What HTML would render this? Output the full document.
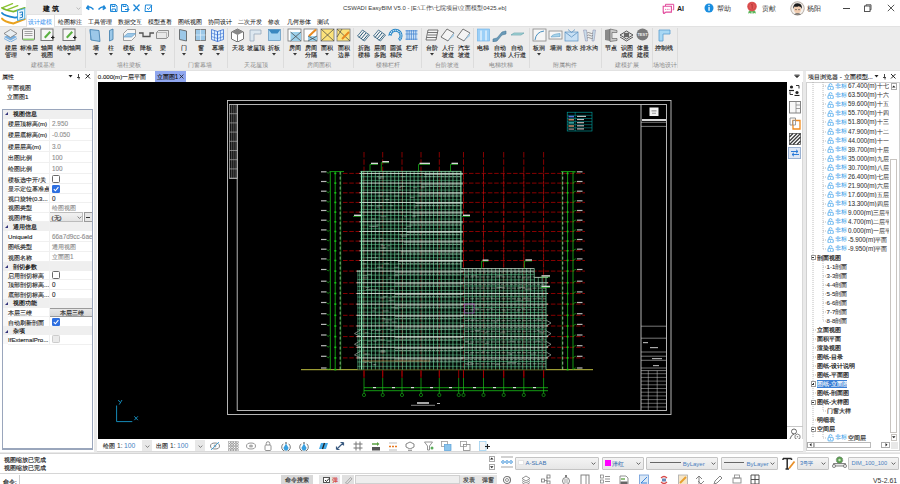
<!DOCTYPE html>
<html><head><meta charset="utf-8">
<style>
*{box-sizing:border-box;margin:0;padding:0}
html,body{width:900px;height:484px;overflow:hidden;background:#fff;font-family:"Liberation Sans",sans-serif;color:#222}
.a{position:absolute}
.t{position:absolute;white-space:nowrap;line-height:1}
#title{left:0;top:0;width:900px;height:15px;background:#fff}
#tabs{left:0;top:15px;width:900px;height:11px;background:#fff}
#ribbon{left:0;top:26px;width:900px;height:45px;background:#ececec;border-top:1px solid #e2e2e2;border-bottom:1px solid #e2e2e2}
#mid{left:0;top:71px;width:900px;height:382px;background:#e9e9e9}
#lp{left:0;top:71px;width:94px;height:381px;background:#fff}
#doc{left:97px;top:71px;width:706px;height:381px;background:#fff}
#cad{left:98px;top:82px;width:689px;height:357px;background:#000}
#rp{left:806px;top:71px;width:94px;height:381px;background:#fff}
#out{left:0;top:453px;width:497px;height:20px;background:#fff;border-top:1px solid #d4d4d4;border-bottom:1px solid #d4d4d4}
#cmd{left:0;top:473px;width:900px;height:11px;background:#fff}
</style></head><body>
<div id="title" class="a"></div>
<div id="tabs" class="a"></div>
<div id="ribbon" class="a"></div>
<div id="mid" class="a"></div>
<div id="lp" class="a"></div>
<div id="doc" class="a"></div>
<svg class="a" style="left:98px;top:82px" width="689" height="357" viewBox="98 82 689 357" shape-rendering="geometricPrecision">
<rect x="98" y="82" width="689" height="357" fill="#000"/>
<rect x="227.5" y="100.5" width="443.5" height="314" fill="none" stroke="#c8c8c8" stroke-width="0.9"/>
<rect x="237.2" y="104.5" width="429.3" height="306" fill="none" stroke="#c8c8c8" stroke-width="0.9"/>
<rect x="229.5" y="104.5" width="7.7" height="74" fill="none" stroke="#c8c8c8" stroke-width="0.7"/>
<line x1="229.5" y1="104.5" x2="237.2" y2="104.5" stroke="#c8c8c8" stroke-width="0.6"/>
<line x1="229.5" y1="113.7" x2="237.2" y2="113.7" stroke="#c8c8c8" stroke-width="0.6"/>
<line x1="229.5" y1="122.9" x2="237.2" y2="122.9" stroke="#c8c8c8" stroke-width="0.6"/>
<line x1="229.5" y1="132.1" x2="237.2" y2="132.1" stroke="#c8c8c8" stroke-width="0.6"/>
<line x1="229.5" y1="141.3" x2="237.2" y2="141.3" stroke="#c8c8c8" stroke-width="0.6"/>
<line x1="229.5" y1="150.5" x2="237.2" y2="150.5" stroke="#c8c8c8" stroke-width="0.6"/>
<line x1="229.5" y1="159.7" x2="237.2" y2="159.7" stroke="#c8c8c8" stroke-width="0.6"/>
<line x1="229.5" y1="168.9" x2="237.2" y2="168.9" stroke="#c8c8c8" stroke-width="0.6"/>
<line x1="229.5" y1="178.1" x2="237.2" y2="178.1" stroke="#c8c8c8" stroke-width="0.6"/>
<line x1="231.3" y1="104.5" x2="231.3" y2="178.5" stroke="#a8a8a8" stroke-width="0.55"/>
<line x1="233.2" y1="104.5" x2="233.2" y2="178.5" stroke="#a8a8a8" stroke-width="0.55"/>
<line x1="235.1" y1="104.5" x2="235.1" y2="178.5" stroke="#a8a8a8" stroke-width="0.55"/>
<line x1="641" y1="104.5" x2="641" y2="410.5" stroke="#c8c8c8" stroke-width="0.9"/>
<line x1="641" y1="126.4" x2="666.5" y2="126.4" stroke="#c8c8c8" stroke-width="0.6"/>
<line x1="641" y1="326.2" x2="666.5" y2="326.2" stroke="#c8c8c8" stroke-width="0.6"/>
<line x1="641" y1="338.2" x2="666.5" y2="338.2" stroke="#c8c8c8" stroke-width="0.6"/>
<line x1="641" y1="352" x2="666.5" y2="352" stroke="#c8c8c8" stroke-width="0.6"/>
<line x1="641" y1="356.2" x2="666.5" y2="356.2" stroke="#c8c8c8" stroke-width="0.6"/>
<line x1="641" y1="360.3" x2="666.5" y2="360.3" stroke="#c8c8c8" stroke-width="0.6"/>
<line x1="641" y1="368" x2="666.5" y2="368" stroke="#c8c8c8" stroke-width="0.6"/>
<line x1="641" y1="370.6" x2="666.5" y2="370.6" stroke="#c8c8c8" stroke-width="0.6"/>
<rect x="649.5" y="107.5" width="9" height="8.5" fill="#f0f0f0"/>
<rect x="651.5" y="110.5" width="5" height="0.8" fill="#666"/><rect x="652" y="112.8" width="4" height="0.8" fill="#888"/>
<rect x="642" y="119" width="24" height="2" fill="#d8d8d8"/>
<line x1="641" y1="122.3" x2="666.5" y2="122.3" stroke="#c8c8c8" stroke-width="0.6"/>
<line x1="641" y1="373.7" x2="666.5" y2="373.7" stroke="#c8c8c8" stroke-width="0.5"/>
<line x1="641" y1="377.4" x2="666.5" y2="377.4" stroke="#c8c8c8" stroke-width="0.5"/>
<line x1="641" y1="381.1" x2="666.5" y2="381.1" stroke="#c8c8c8" stroke-width="0.5"/>
<line x1="641" y1="384.8" x2="666.5" y2="384.8" stroke="#c8c8c8" stroke-width="0.5"/>
<line x1="641" y1="388.5" x2="666.5" y2="388.5" stroke="#c8c8c8" stroke-width="0.5"/>
<line x1="641" y1="392.2" x2="666.5" y2="392.2" stroke="#c8c8c8" stroke-width="0.5"/>
<line x1="641" y1="395.9" x2="666.5" y2="395.9" stroke="#c8c8c8" stroke-width="0.5"/>
<line x1="641" y1="399.6" x2="666.5" y2="399.6" stroke="#c8c8c8" stroke-width="0.5"/>
<line x1="641" y1="403.3" x2="666.5" y2="403.3" stroke="#c8c8c8" stroke-width="0.5"/>
<line x1="641" y1="407.0" x2="666.5" y2="407.0" stroke="#c8c8c8" stroke-width="0.5"/>
<line x1="648.3" y1="370.6" x2="648.3" y2="410.5" stroke="#c8c8c8" stroke-width="0.5"/>
<line x1="657.2" y1="370.6" x2="657.2" y2="410.5" stroke="#c8c8c8" stroke-width="0.5"/>
<rect x="650" y="347" width="8" height="1.2" fill="#aaa"/>
<rect x="652" y="358" width="10" height="1.2" fill="#aaa"/>
<rect x="653" y="365" width="6" height="1.2" fill="#aaa"/>
<rect x="643" y="342" width="5" height="1.2" fill="#aaa"/>
<rect x="567.2" y="112.2" width="24.8" height="18.8" fill="none" stroke="#00a8a8" stroke-width="0.6"/>
<line x1="575.2" y1="112.2" x2="575.2" y2="131" stroke="#00a8a8" stroke-width="0.5"/>
<line x1="567.2" y1="115.3" x2="592" y2="115.3" stroke="#00a8a8" stroke-width="0.5"/>
<line x1="567.2" y1="118.5" x2="592" y2="118.5" stroke="#00a8a8" stroke-width="0.5"/>
<line x1="567.2" y1="121.6" x2="592" y2="121.6" stroke="#00a8a8" stroke-width="0.5"/>
<line x1="567.2" y1="124.7" x2="592" y2="124.7" stroke="#00a8a8" stroke-width="0.5"/>
<line x1="567.2" y1="127.8" x2="592" y2="127.8" stroke="#00a8a8" stroke-width="0.5"/>
<rect x="568.5" y="115.8" width="5.5" height="1.6" fill="#5577dd"/>
<rect x="577" y="115.8" width="9" height="1.2" fill="#bbb"/>
<rect x="568.5" y="118.9" width="5.5" height="1.6" fill="#bb8866"/>
<rect x="577" y="118.9" width="7" height="1.2" fill="#bbb"/>
<rect x="568.5" y="122.1" width="5.5" height="1.6" fill="#33aaaa"/>
<rect x="577" y="122.1" width="7" height="1.2" fill="#bbb"/>
<rect x="568.5" y="125.2" width="5.5" height="1.6" fill="#bb8866"/>
<rect x="577" y="125.2" width="7" height="1.2" fill="#bbb"/>
<rect x="568.5" y="128.3" width="5.5" height="1.6" fill="#777"/>
<rect x="577" y="128.3" width="7" height="1.2" fill="#bbb"/>
<line x1="343" y1="357.9" x2="585" y2="357.9" stroke="#a80000" stroke-width="0.8" stroke-dasharray="4.5 1.8"/>
<line x1="343" y1="347.3" x2="585" y2="347.3" stroke="#a80000" stroke-width="0.8" stroke-dasharray="4.5 1.8"/>
<line x1="343" y1="336.6" x2="585" y2="336.6" stroke="#a80000" stroke-width="0.8" stroke-dasharray="4.5 1.8"/>
<line x1="343" y1="326.0" x2="585" y2="326.0" stroke="#a80000" stroke-width="0.8" stroke-dasharray="4.5 1.8"/>
<line x1="343" y1="315.3" x2="585" y2="315.3" stroke="#a80000" stroke-width="0.8" stroke-dasharray="4.5 1.8"/>
<line x1="343" y1="304.1" x2="585" y2="304.1" stroke="#a80000" stroke-width="0.8" stroke-dasharray="4.5 1.8"/>
<line x1="343" y1="293.5" x2="585" y2="293.5" stroke="#a80000" stroke-width="0.8" stroke-dasharray="4.5 1.8"/>
<line x1="343" y1="282.8" x2="585" y2="282.8" stroke="#a80000" stroke-width="0.8" stroke-dasharray="4.5 1.8"/>
<line x1="343" y1="271.1" x2="585" y2="271.1" stroke="#a80000" stroke-width="0.8" stroke-dasharray="4.5 1.8"/>
<line x1="343" y1="260.5" x2="585" y2="260.5" stroke="#a80000" stroke-width="0.8" stroke-dasharray="4.5 1.8"/>
<line x1="343" y1="250.8" x2="585" y2="250.8" stroke="#a80000" stroke-width="0.8" stroke-dasharray="4.5 1.8"/>
<line x1="343" y1="241.1" x2="585" y2="241.1" stroke="#a80000" stroke-width="0.8" stroke-dasharray="4.5 1.8"/>
<line x1="343" y1="231.5" x2="585" y2="231.5" stroke="#a80000" stroke-width="0.8" stroke-dasharray="4.5 1.8"/>
<line x1="343" y1="221.8" x2="585" y2="221.8" stroke="#a80000" stroke-width="0.8" stroke-dasharray="4.5 1.8"/>
<line x1="343" y1="212.1" x2="585" y2="212.1" stroke="#a80000" stroke-width="0.8" stroke-dasharray="4.5 1.8"/>
<line x1="343" y1="202.4" x2="585" y2="202.4" stroke="#a80000" stroke-width="0.8" stroke-dasharray="4.5 1.8"/>
<line x1="343" y1="192.8" x2="585" y2="192.8" stroke="#a80000" stroke-width="0.8" stroke-dasharray="4.5 1.8"/>
<line x1="343" y1="183.1" x2="585" y2="183.1" stroke="#a80000" stroke-width="0.8" stroke-dasharray="4.5 1.8"/>
<line x1="343" y1="173.4" x2="585" y2="173.4" stroke="#a80000" stroke-width="0.8" stroke-dasharray="4.5 1.8"/>
<line x1="364" y1="152" x2="364" y2="378" stroke="#a80000" stroke-width="0.8" stroke-dasharray="5.5 1.8"/>
<line x1="382.7" y1="152" x2="382.7" y2="378" stroke="#a80000" stroke-width="0.8" stroke-dasharray="5.5 1.8"/>
<line x1="402" y1="152" x2="402" y2="378" stroke="#a80000" stroke-width="0.8" stroke-dasharray="5.5 1.8"/>
<line x1="421" y1="152" x2="421" y2="378" stroke="#a80000" stroke-width="0.8" stroke-dasharray="5.5 1.8"/>
<line x1="439.3" y1="152" x2="439.3" y2="378" stroke="#a80000" stroke-width="0.8" stroke-dasharray="5.5 1.8"/>
<line x1="463.5" y1="152" x2="463.5" y2="378" stroke="#a80000" stroke-width="0.8" stroke-dasharray="5.5 1.8"/>
<line x1="483.5" y1="152" x2="483.5" y2="378" stroke="#a80000" stroke-width="0.8" stroke-dasharray="5.5 1.8"/>
<line x1="503.7" y1="152" x2="503.7" y2="378" stroke="#a80000" stroke-width="0.8" stroke-dasharray="5.5 1.8"/>
<line x1="523.8" y1="152" x2="523.8" y2="378" stroke="#a80000" stroke-width="0.8" stroke-dasharray="5.5 1.8"/>
<line x1="543.6" y1="152" x2="543.6" y2="378" stroke="#a80000" stroke-width="0.8" stroke-dasharray="5.5 1.8"/>
<line x1="301" y1="369.7" x2="593" y2="369.7" stroke="#c0c040" stroke-width="1"/>
<line x1="330.3" y1="171.6" x2="330.3" y2="369.7" stroke="#18c018" stroke-width="0.8"/>
<line x1="335.2" y1="171.6" x2="335.2" y2="369.7" stroke="#18c018" stroke-width="0.8"/>
<line x1="340.2" y1="171.6" x2="340.2" y2="369.7" stroke="#e8e8e8" stroke-width="0.8" stroke-dasharray="3 2"/>
<line x1="340.8" y1="171.6" x2="340.8" y2="369.7" stroke="#18c018" stroke-width="0.5"/>
<line x1="329.5" y1="171.6" x2="344" y2="171.6" stroke="#18c018" stroke-width="0.8"/>
<rect x="321" y="367.4" width="5.5" height="1.2" fill="#b8b8b8"/>
<path d="M326.5 368.1 l1.8 1.5 l1.2 -1.5" stroke="#18c018" stroke-width="0.6" fill="none"/>
<rect x="334.3" y="368.8" width="2" height="1.6" fill="#18c018"/>
<rect x="321" y="355.7" width="5.5" height="1.2" fill="#b8b8b8"/>
<path d="M326.5 356.4 l1.8 1.5 l1.2 -1.5" stroke="#18c018" stroke-width="0.6" fill="none"/>
<rect x="334.3" y="357.1" width="2" height="1.6" fill="#18c018"/>
<rect x="321" y="345.1" width="5.5" height="1.2" fill="#b8b8b8"/>
<path d="M326.5 345.8 l1.8 1.5 l1.2 -1.5" stroke="#18c018" stroke-width="0.6" fill="none"/>
<rect x="334.3" y="346.5" width="2" height="1.6" fill="#18c018"/>
<rect x="321" y="334.4" width="5.5" height="1.2" fill="#b8b8b8"/>
<path d="M326.5 335.1 l1.8 1.5 l1.2 -1.5" stroke="#18c018" stroke-width="0.6" fill="none"/>
<rect x="334.3" y="335.8" width="2" height="1.6" fill="#18c018"/>
<rect x="321" y="323.8" width="5.5" height="1.2" fill="#b8b8b8"/>
<path d="M326.5 324.5 l1.8 1.5 l1.2 -1.5" stroke="#18c018" stroke-width="0.6" fill="none"/>
<rect x="334.3" y="325.2" width="2" height="1.6" fill="#18c018"/>
<rect x="321" y="313.1" width="5.5" height="1.2" fill="#b8b8b8"/>
<path d="M326.5 313.8 l1.8 1.5 l1.2 -1.5" stroke="#18c018" stroke-width="0.6" fill="none"/>
<rect x="334.3" y="314.5" width="2" height="1.6" fill="#18c018"/>
<rect x="321" y="301.9" width="5.5" height="1.2" fill="#b8b8b8"/>
<path d="M326.5 302.6 l1.8 1.5 l1.2 -1.5" stroke="#18c018" stroke-width="0.6" fill="none"/>
<rect x="334.3" y="303.3" width="2" height="1.6" fill="#18c018"/>
<rect x="321" y="291.3" width="5.5" height="1.2" fill="#b8b8b8"/>
<path d="M326.5 292.0 l1.8 1.5 l1.2 -1.5" stroke="#18c018" stroke-width="0.6" fill="none"/>
<rect x="334.3" y="292.7" width="2" height="1.6" fill="#18c018"/>
<rect x="321" y="280.6" width="5.5" height="1.2" fill="#b8b8b8"/>
<path d="M326.5 281.3 l1.8 1.5 l1.2 -1.5" stroke="#18c018" stroke-width="0.6" fill="none"/>
<rect x="334.3" y="282.0" width="2" height="1.6" fill="#18c018"/>
<rect x="321" y="268.9" width="5.5" height="1.2" fill="#b8b8b8"/>
<path d="M326.5 269.6 l1.8 1.5 l1.2 -1.5" stroke="#18c018" stroke-width="0.6" fill="none"/>
<rect x="334.3" y="270.3" width="2" height="1.6" fill="#18c018"/>
<rect x="321" y="258.3" width="5.5" height="1.2" fill="#b8b8b8"/>
<path d="M326.5 259.0 l1.8 1.5 l1.2 -1.5" stroke="#18c018" stroke-width="0.6" fill="none"/>
<rect x="334.3" y="259.7" width="2" height="1.6" fill="#18c018"/>
<rect x="321" y="248.6" width="5.5" height="1.2" fill="#b8b8b8"/>
<path d="M326.5 249.3 l1.8 1.5 l1.2 -1.5" stroke="#18c018" stroke-width="0.6" fill="none"/>
<rect x="334.3" y="250.0" width="2" height="1.6" fill="#18c018"/>
<rect x="321" y="238.9" width="5.5" height="1.2" fill="#b8b8b8"/>
<path d="M326.5 239.6 l1.8 1.5 l1.2 -1.5" stroke="#18c018" stroke-width="0.6" fill="none"/>
<rect x="334.3" y="240.3" width="2" height="1.6" fill="#18c018"/>
<rect x="321" y="229.3" width="5.5" height="1.2" fill="#b8b8b8"/>
<path d="M326.5 230.0 l1.8 1.5 l1.2 -1.5" stroke="#18c018" stroke-width="0.6" fill="none"/>
<rect x="334.3" y="230.7" width="2" height="1.6" fill="#18c018"/>
<rect x="321" y="219.6" width="5.5" height="1.2" fill="#b8b8b8"/>
<path d="M326.5 220.3 l1.8 1.5 l1.2 -1.5" stroke="#18c018" stroke-width="0.6" fill="none"/>
<rect x="334.3" y="221.0" width="2" height="1.6" fill="#18c018"/>
<rect x="321" y="209.9" width="5.5" height="1.2" fill="#b8b8b8"/>
<path d="M326.5 210.6 l1.8 1.5 l1.2 -1.5" stroke="#18c018" stroke-width="0.6" fill="none"/>
<rect x="334.3" y="211.3" width="2" height="1.6" fill="#18c018"/>
<rect x="321" y="200.2" width="5.5" height="1.2" fill="#b8b8b8"/>
<path d="M326.5 200.9 l1.8 1.5 l1.2 -1.5" stroke="#18c018" stroke-width="0.6" fill="none"/>
<rect x="334.3" y="201.6" width="2" height="1.6" fill="#18c018"/>
<rect x="321" y="190.6" width="5.5" height="1.2" fill="#b8b8b8"/>
<path d="M326.5 191.3 l1.8 1.5 l1.2 -1.5" stroke="#18c018" stroke-width="0.6" fill="none"/>
<rect x="334.3" y="192.0" width="2" height="1.6" fill="#18c018"/>
<rect x="321" y="180.9" width="5.5" height="1.2" fill="#b8b8b8"/>
<path d="M326.5 181.6 l1.8 1.5 l1.2 -1.5" stroke="#18c018" stroke-width="0.6" fill="none"/>
<rect x="334.3" y="182.3" width="2" height="1.6" fill="#18c018"/>
<rect x="321" y="171.2" width="5.5" height="1.2" fill="#b8b8b8"/>
<path d="M326.5 171.9 l1.8 1.5 l1.2 -1.5" stroke="#18c018" stroke-width="0.6" fill="none"/>
<rect x="334.3" y="172.6" width="2" height="1.6" fill="#18c018"/>
<line x1="567.6" y1="171.6" x2="567.6" y2="369.7" stroke="#18c018" stroke-width="0.8"/>
<line x1="573" y1="171.6" x2="573" y2="369.7" stroke="#18c018" stroke-width="0.8"/>
<line x1="562.7" y1="171.6" x2="562.7" y2="369.7" stroke="#e8e8e8" stroke-width="0.8" stroke-dasharray="3 2"/>
<line x1="562.1" y1="171.6" x2="562.1" y2="369.7" stroke="#18c018" stroke-width="0.5"/>
<line x1="561" y1="171.6" x2="575" y2="171.6" stroke="#18c018" stroke-width="0.8"/>
<rect x="577" y="367.4" width="5.5" height="1.2" fill="#b8b8b8"/>
<path d="M573 369.6 l2 -1.6 l1.5 0" stroke="#18c018" stroke-width="0.6" fill="none"/>
<rect x="566.6" y="368.8" width="2" height="1.6" fill="#18c018"/>
<rect x="577" y="355.7" width="5.5" height="1.2" fill="#b8b8b8"/>
<path d="M573 357.9 l2 -1.6 l1.5 0" stroke="#18c018" stroke-width="0.6" fill="none"/>
<rect x="566.6" y="357.1" width="2" height="1.6" fill="#18c018"/>
<rect x="577" y="345.1" width="5.5" height="1.2" fill="#b8b8b8"/>
<path d="M573 347.3 l2 -1.6 l1.5 0" stroke="#18c018" stroke-width="0.6" fill="none"/>
<rect x="566.6" y="346.5" width="2" height="1.6" fill="#18c018"/>
<rect x="577" y="334.4" width="5.5" height="1.2" fill="#b8b8b8"/>
<path d="M573 336.6 l2 -1.6 l1.5 0" stroke="#18c018" stroke-width="0.6" fill="none"/>
<rect x="566.6" y="335.8" width="2" height="1.6" fill="#18c018"/>
<rect x="577" y="323.8" width="5.5" height="1.2" fill="#b8b8b8"/>
<path d="M573 326.0 l2 -1.6 l1.5 0" stroke="#18c018" stroke-width="0.6" fill="none"/>
<rect x="566.6" y="325.2" width="2" height="1.6" fill="#18c018"/>
<rect x="577" y="313.1" width="5.5" height="1.2" fill="#b8b8b8"/>
<path d="M573 315.3 l2 -1.6 l1.5 0" stroke="#18c018" stroke-width="0.6" fill="none"/>
<rect x="566.6" y="314.5" width="2" height="1.6" fill="#18c018"/>
<rect x="577" y="301.9" width="5.5" height="1.2" fill="#b8b8b8"/>
<path d="M573 304.1 l2 -1.6 l1.5 0" stroke="#18c018" stroke-width="0.6" fill="none"/>
<rect x="566.6" y="303.3" width="2" height="1.6" fill="#18c018"/>
<rect x="577" y="291.3" width="5.5" height="1.2" fill="#b8b8b8"/>
<path d="M573 293.5 l2 -1.6 l1.5 0" stroke="#18c018" stroke-width="0.6" fill="none"/>
<rect x="566.6" y="292.7" width="2" height="1.6" fill="#18c018"/>
<rect x="577" y="280.6" width="5.5" height="1.2" fill="#b8b8b8"/>
<path d="M573 282.8 l2 -1.6 l1.5 0" stroke="#18c018" stroke-width="0.6" fill="none"/>
<rect x="566.6" y="282.0" width="2" height="1.6" fill="#18c018"/>
<rect x="577" y="268.9" width="5.5" height="1.2" fill="#b8b8b8"/>
<path d="M573 271.1 l2 -1.6 l1.5 0" stroke="#18c018" stroke-width="0.6" fill="none"/>
<rect x="566.6" y="270.3" width="2" height="1.6" fill="#18c018"/>
<rect x="577" y="258.3" width="5.5" height="1.2" fill="#b8b8b8"/>
<path d="M573 260.5 l2 -1.6 l1.5 0" stroke="#18c018" stroke-width="0.6" fill="none"/>
<rect x="566.6" y="259.7" width="2" height="1.6" fill="#18c018"/>
<rect x="577" y="248.6" width="5.5" height="1.2" fill="#b8b8b8"/>
<path d="M573 250.8 l2 -1.6 l1.5 0" stroke="#18c018" stroke-width="0.6" fill="none"/>
<rect x="566.6" y="250.0" width="2" height="1.6" fill="#18c018"/>
<rect x="577" y="238.9" width="5.5" height="1.2" fill="#b8b8b8"/>
<path d="M573 241.1 l2 -1.6 l1.5 0" stroke="#18c018" stroke-width="0.6" fill="none"/>
<rect x="566.6" y="240.3" width="2" height="1.6" fill="#18c018"/>
<rect x="577" y="229.3" width="5.5" height="1.2" fill="#b8b8b8"/>
<path d="M573 231.5 l2 -1.6 l1.5 0" stroke="#18c018" stroke-width="0.6" fill="none"/>
<rect x="566.6" y="230.7" width="2" height="1.6" fill="#18c018"/>
<rect x="577" y="219.6" width="5.5" height="1.2" fill="#b8b8b8"/>
<path d="M573 221.8 l2 -1.6 l1.5 0" stroke="#18c018" stroke-width="0.6" fill="none"/>
<rect x="566.6" y="221.0" width="2" height="1.6" fill="#18c018"/>
<rect x="577" y="209.9" width="5.5" height="1.2" fill="#b8b8b8"/>
<path d="M573 212.1 l2 -1.6 l1.5 0" stroke="#18c018" stroke-width="0.6" fill="none"/>
<rect x="566.6" y="211.3" width="2" height="1.6" fill="#18c018"/>
<rect x="577" y="200.2" width="5.5" height="1.2" fill="#b8b8b8"/>
<path d="M573 202.4 l2 -1.6 l1.5 0" stroke="#18c018" stroke-width="0.6" fill="none"/>
<rect x="566.6" y="201.6" width="2" height="1.6" fill="#18c018"/>
<rect x="577" y="190.6" width="5.5" height="1.2" fill="#b8b8b8"/>
<path d="M573 192.8 l2 -1.6 l1.5 0" stroke="#18c018" stroke-width="0.6" fill="none"/>
<rect x="566.6" y="192.0" width="2" height="1.6" fill="#18c018"/>
<rect x="577" y="180.9" width="5.5" height="1.2" fill="#b8b8b8"/>
<path d="M573 183.1 l2 -1.6 l1.5 0" stroke="#18c018" stroke-width="0.6" fill="none"/>
<rect x="566.6" y="182.3" width="2" height="1.6" fill="#18c018"/>
<rect x="577" y="171.2" width="5.5" height="1.2" fill="#b8b8b8"/>
<path d="M573 173.4 l2 -1.6 l1.5 0" stroke="#18c018" stroke-width="0.6" fill="none"/>
<rect x="566.6" y="172.6" width="2" height="1.6" fill="#18c018"/>
<rect x="360.5" y="171.2" width="100.7" height="198.4" fill="#050c08"/>
<rect x="461.2" y="277.4" width="84.8" height="92.2" fill="#050c08"/>
<rect x="461.2" y="268.4" width="73" height="9" fill="#050c08"/>
<rect x="357.5" y="270" width="3" height="99.6" fill="#050c08"/>
<path d="M363.70 171.20V369.60M367.58 171.20V369.60M371.46 171.20V369.60M375.34 171.20V369.60M379.22 171.20V369.60M383.10 171.20V369.60M386.98 171.20V369.60M390.86 171.20V369.60M394.74 171.20V369.60M398.62 171.20V369.60M402.50 171.20V369.60M406.38 171.20V369.60M410.26 171.20V369.60M414.14 171.20V369.60M418.02 171.20V369.60M421.90 171.20V369.60M425.78 171.20V369.60M429.66 171.20V369.60M433.54 171.20V369.60M437.42 171.20V369.60M441.30 171.20V369.60M445.18 171.20V369.60M449.06 171.20V369.60M452.94 171.20V369.60M456.82 171.20V369.60M460.70 171.20V369.60" stroke="#6cd69e" stroke-width="0.68" fill="none"/>
<path d="M464.58 268.40V369.60M468.46 268.40V369.60M472.34 268.40V369.60M476.22 268.40V369.60M480.10 268.40V369.60M483.98 268.40V369.60M487.86 268.40V369.60M491.74 268.40V369.60M495.62 268.40V369.60M499.50 268.40V369.60M503.38 268.40V369.60M507.26 268.40V369.60M511.14 268.40V369.60M515.02 268.40V369.60M518.90 268.40V369.60M522.78 268.40V369.60M526.66 268.40V369.60M530.54 268.40V369.60" stroke="#6cd69e" stroke-width="0.68" fill="none"/>
<path d="M534.42 277.40V369.60M538.30 277.40V369.60M542.18 277.40V369.60" stroke="#6cd69e" stroke-width="0.68" fill="none"/>
<path d="M357.80 270.00V369.60M359.60 270.00V369.60" stroke="#6cd69e" stroke-width="0.5" fill="none"/>
<line x1="364" y1="171.5" x2="364" y2="369.5" stroke="#c01818" stroke-width="0.7" stroke-dasharray="5 1.6" opacity="0.55"/>
<line x1="382.7" y1="171.5" x2="382.7" y2="369.5" stroke="#c01818" stroke-width="0.7" stroke-dasharray="5 1.6" opacity="0.55"/>
<line x1="402" y1="171.5" x2="402" y2="369.5" stroke="#c01818" stroke-width="0.7" stroke-dasharray="5 1.6" opacity="0.55"/>
<line x1="421" y1="171.5" x2="421" y2="369.5" stroke="#c01818" stroke-width="0.7" stroke-dasharray="5 1.6" opacity="0.55"/>
<line x1="439.3" y1="171.5" x2="439.3" y2="369.5" stroke="#c01818" stroke-width="0.7" stroke-dasharray="5 1.6" opacity="0.55"/>
<line x1="463.5" y1="171.5" x2="463.5" y2="369.5" stroke="#c01818" stroke-width="0.7" stroke-dasharray="5 1.6" opacity="0.55"/>
<line x1="483.5" y1="171.5" x2="483.5" y2="369.5" stroke="#c01818" stroke-width="0.7" stroke-dasharray="5 1.6" opacity="0.55"/>
<line x1="503.7" y1="171.5" x2="503.7" y2="369.5" stroke="#c01818" stroke-width="0.7" stroke-dasharray="5 1.6" opacity="0.55"/>
<line x1="523.8" y1="171.5" x2="523.8" y2="369.5" stroke="#c01818" stroke-width="0.7" stroke-dasharray="5 1.6" opacity="0.55"/>
<line x1="543.6" y1="171.5" x2="543.6" y2="369.5" stroke="#c01818" stroke-width="0.7" stroke-dasharray="5 1.6" opacity="0.55"/>
<line x1="356.50" y1="357.94" x2="462.80" y2="357.94" stroke="#dcebdf" stroke-width="0.9"/>
<line x1="357.50" y1="361.91" x2="461.20" y2="361.91" stroke="#6cd69e" stroke-width="0.55"/>
<line x1="357.50" y1="366.34" x2="461.20" y2="366.34" stroke="#6cd69e" stroke-width="0.5"/>
<line x1="395.00" y1="358.94" x2="462.80" y2="358.94" stroke="#c4d4c8" stroke-width="0.65"/>
<line x1="395.00" y1="361.14" x2="461.20" y2="361.14" stroke="#b4c2b8" stroke-width="0.55" stroke-dasharray="3.2 0.9"/>
<line x1="372.69" y1="364.74" x2="375.29" y2="364.74" stroke="#b0c0b4" stroke-width="0.5"/>
<line x1="363.59" y1="361.14" x2="368.88" y2="361.14" stroke="#b0c0b4" stroke-width="0.5"/>
<line x1="374.07" y1="364.74" x2="376.30" y2="364.74" stroke="#b0c0b4" stroke-width="0.5"/>
<line x1="369.09" y1="362.54" x2="371.43" y2="362.54" stroke="#b0c0b4" stroke-width="0.5"/>
<line x1="364.31" y1="362.54" x2="366.67" y2="362.54" stroke="#b0c0b4" stroke-width="0.5"/>
<line x1="461.20" y1="357.94" x2="548.00" y2="357.94" stroke="#dcebdf" stroke-width="0.9"/>
<line x1="461.20" y1="361.44" x2="546.00" y2="361.44" stroke="#6cd69e" stroke-width="0.55"/>
<line x1="461.20" y1="366.69" x2="546.00" y2="366.69" stroke="#6cd69e" stroke-width="0.5"/>
<line x1="465.00" y1="363.77" x2="546.00" y2="363.77" stroke="#b8c8bc" stroke-width="0.6" stroke-dasharray="4 1.2"/>
<line x1="465.00" y1="359.54" x2="546.00" y2="359.54" stroke="#a8bcac" stroke-width="0.5" stroke-dasharray="3 1.5"/>
<line x1="467.55" y1="362.54" x2="472.38" y2="362.54" stroke="#a8b8ac" stroke-width="0.5"/>
<line x1="511.56" y1="362.54" x2="516.47" y2="362.54" stroke="#a8b8ac" stroke-width="0.5"/>
<line x1="507.44" y1="362.54" x2="511.42" y2="362.54" stroke="#a8b8ac" stroke-width="0.5"/>
<line x1="466.59" y1="364.74" x2="472.88" y2="364.74" stroke="#a8b8ac" stroke-width="0.5"/>
<line x1="495.27" y1="364.74" x2="499.98" y2="364.74" stroke="#a8b8ac" stroke-width="0.5"/>
<line x1="356.50" y1="347.28" x2="462.80" y2="347.28" stroke="#dcebdf" stroke-width="0.9"/>
<line x1="357.50" y1="350.91" x2="461.20" y2="350.91" stroke="#6cd69e" stroke-width="0.55"/>
<line x1="357.50" y1="354.96" x2="461.20" y2="354.96" stroke="#6cd69e" stroke-width="0.5"/>
<line x1="395.00" y1="348.28" x2="462.80" y2="348.28" stroke="#c4d4c8" stroke-width="0.65"/>
<line x1="395.00" y1="350.48" x2="461.20" y2="350.48" stroke="#b4c2b8" stroke-width="0.55" stroke-dasharray="3.2 0.9"/>
<line x1="380.49" y1="350.48" x2="385.22" y2="350.48" stroke="#b0c0b4" stroke-width="0.5"/>
<line x1="381.19" y1="351.88" x2="385.75" y2="351.88" stroke="#b0c0b4" stroke-width="0.5"/>
<line x1="365.22" y1="354.08" x2="370.06" y2="354.08" stroke="#b0c0b4" stroke-width="0.5"/>
<line x1="363.97" y1="354.08" x2="366.79" y2="354.08" stroke="#b0c0b4" stroke-width="0.5"/>
<line x1="379.55" y1="351.88" x2="384.66" y2="351.88" stroke="#b0c0b4" stroke-width="0.5"/>
<line x1="461.20" y1="347.28" x2="548.00" y2="347.28" stroke="#dcebdf" stroke-width="0.9"/>
<line x1="461.20" y1="350.48" x2="546.00" y2="350.48" stroke="#6cd69e" stroke-width="0.55"/>
<line x1="461.20" y1="355.28" x2="546.00" y2="355.28" stroke="#6cd69e" stroke-width="0.5"/>
<line x1="465.00" y1="352.61" x2="546.00" y2="352.61" stroke="#b8c8bc" stroke-width="0.6" stroke-dasharray="4 1.2"/>
<line x1="465.00" y1="348.88" x2="546.00" y2="348.88" stroke="#a8bcac" stroke-width="0.5" stroke-dasharray="3 1.5"/>
<line x1="508.09" y1="354.08" x2="512.35" y2="354.08" stroke="#a8b8ac" stroke-width="0.5"/>
<line x1="482.13" y1="351.88" x2="485.03" y2="351.88" stroke="#a8b8ac" stroke-width="0.5"/>
<line x1="469.30" y1="354.08" x2="472.80" y2="354.08" stroke="#a8b8ac" stroke-width="0.5"/>
<line x1="530.39" y1="354.08" x2="536.03" y2="354.08" stroke="#a8b8ac" stroke-width="0.5"/>
<line x1="509.89" y1="354.08" x2="512.26" y2="354.08" stroke="#a8b8ac" stroke-width="0.5"/>
<line x1="356.50" y1="336.62" x2="462.80" y2="336.62" stroke="#dcebdf" stroke-width="0.9"/>
<line x1="357.50" y1="340.24" x2="461.20" y2="340.24" stroke="#6cd69e" stroke-width="0.55"/>
<line x1="357.50" y1="344.29" x2="461.20" y2="344.29" stroke="#6cd69e" stroke-width="0.5"/>
<line x1="395.00" y1="337.62" x2="462.80" y2="337.62" stroke="#c4d4c8" stroke-width="0.65"/>
<line x1="395.00" y1="339.82" x2="461.20" y2="339.82" stroke="#b4c2b8" stroke-width="0.55" stroke-dasharray="3.2 0.9"/>
<line x1="367.44" y1="341.22" x2="370.81" y2="341.22" stroke="#b0c0b4" stroke-width="0.5"/>
<line x1="375.92" y1="339.82" x2="381.76" y2="339.82" stroke="#b0c0b4" stroke-width="0.5"/>
<line x1="387.23" y1="341.22" x2="391.52" y2="341.22" stroke="#b0c0b4" stroke-width="0.5"/>
<line x1="373.22" y1="341.22" x2="376.62" y2="341.22" stroke="#b0c0b4" stroke-width="0.5"/>
<line x1="381.14" y1="339.82" x2="384.96" y2="339.82" stroke="#b0c0b4" stroke-width="0.5"/>
<line x1="461.20" y1="336.62" x2="548.00" y2="336.62" stroke="#dcebdf" stroke-width="0.9"/>
<line x1="461.20" y1="339.82" x2="546.00" y2="339.82" stroke="#6cd69e" stroke-width="0.55"/>
<line x1="461.20" y1="344.61" x2="546.00" y2="344.61" stroke="#6cd69e" stroke-width="0.5"/>
<line x1="465.00" y1="341.95" x2="546.00" y2="341.95" stroke="#b8c8bc" stroke-width="0.6" stroke-dasharray="4 1.2"/>
<line x1="465.00" y1="338.22" x2="546.00" y2="338.22" stroke="#a8bcac" stroke-width="0.5" stroke-dasharray="3 1.5"/>
<line x1="535.74" y1="341.22" x2="540.11" y2="341.22" stroke="#a8b8ac" stroke-width="0.5"/>
<line x1="467.67" y1="343.42" x2="473.18" y2="343.42" stroke="#a8b8ac" stroke-width="0.5"/>
<line x1="484.91" y1="343.42" x2="488.84" y2="343.42" stroke="#a8b8ac" stroke-width="0.5"/>
<line x1="464.74" y1="341.22" x2="469.05" y2="341.22" stroke="#a8b8ac" stroke-width="0.5"/>
<line x1="510.04" y1="341.22" x2="514.51" y2="341.22" stroke="#a8b8ac" stroke-width="0.5"/>
<line x1="356.50" y1="325.95" x2="462.80" y2="325.95" stroke="#dcebdf" stroke-width="0.9"/>
<line x1="357.50" y1="329.58" x2="461.20" y2="329.58" stroke="#6cd69e" stroke-width="0.55"/>
<line x1="357.50" y1="333.63" x2="461.20" y2="333.63" stroke="#6cd69e" stroke-width="0.5"/>
<line x1="395.00" y1="326.95" x2="462.80" y2="326.95" stroke="#c4d4c8" stroke-width="0.65"/>
<line x1="395.00" y1="329.15" x2="461.20" y2="329.15" stroke="#b4c2b8" stroke-width="0.55" stroke-dasharray="3.2 0.9"/>
<line x1="387.35" y1="329.15" x2="389.87" y2="329.15" stroke="#b0c0b4" stroke-width="0.5"/>
<line x1="375.13" y1="330.55" x2="380.80" y2="330.55" stroke="#b0c0b4" stroke-width="0.5"/>
<line x1="364.66" y1="332.75" x2="368.46" y2="332.75" stroke="#b0c0b4" stroke-width="0.5"/>
<line x1="371.17" y1="330.55" x2="373.72" y2="330.55" stroke="#b0c0b4" stroke-width="0.5"/>
<line x1="390.51" y1="330.55" x2="393.63" y2="330.55" stroke="#b0c0b4" stroke-width="0.5"/>
<line x1="461.20" y1="325.95" x2="548.00" y2="325.95" stroke="#dcebdf" stroke-width="0.9"/>
<line x1="461.20" y1="329.15" x2="546.00" y2="329.15" stroke="#6cd69e" stroke-width="0.55"/>
<line x1="461.20" y1="333.95" x2="546.00" y2="333.95" stroke="#6cd69e" stroke-width="0.5"/>
<line x1="465.00" y1="331.28" x2="546.00" y2="331.28" stroke="#b8c8bc" stroke-width="0.6" stroke-dasharray="4 1.2"/>
<line x1="465.00" y1="327.55" x2="546.00" y2="327.55" stroke="#a8bcac" stroke-width="0.5" stroke-dasharray="3 1.5"/>
<line x1="538.96" y1="332.75" x2="544.37" y2="332.75" stroke="#a8b8ac" stroke-width="0.5"/>
<line x1="536.75" y1="330.55" x2="539.50" y2="330.55" stroke="#a8b8ac" stroke-width="0.5"/>
<line x1="474.65" y1="330.55" x2="479.94" y2="330.55" stroke="#a8b8ac" stroke-width="0.5"/>
<line x1="500.34" y1="332.75" x2="505.29" y2="332.75" stroke="#a8b8ac" stroke-width="0.5"/>
<line x1="484.71" y1="332.75" x2="487.44" y2="332.75" stroke="#a8b8ac" stroke-width="0.5"/>
<line x1="356.50" y1="315.29" x2="462.80" y2="315.29" stroke="#dcebdf" stroke-width="0.9"/>
<line x1="357.50" y1="318.91" x2="461.20" y2="318.91" stroke="#6cd69e" stroke-width="0.55"/>
<line x1="357.50" y1="322.97" x2="461.20" y2="322.97" stroke="#6cd69e" stroke-width="0.5"/>
<line x1="395.00" y1="316.29" x2="462.80" y2="316.29" stroke="#c4d4c8" stroke-width="0.65"/>
<line x1="395.00" y1="318.49" x2="461.20" y2="318.49" stroke="#b4c2b8" stroke-width="0.55" stroke-dasharray="3.2 0.9"/>
<line x1="382.12" y1="318.49" x2="385.40" y2="318.49" stroke="#b0c0b4" stroke-width="0.5"/>
<line x1="384.79" y1="322.09" x2="388.85" y2="322.09" stroke="#b0c0b4" stroke-width="0.5"/>
<line x1="383.61" y1="319.89" x2="388.57" y2="319.89" stroke="#b0c0b4" stroke-width="0.5"/>
<line x1="391.68" y1="322.09" x2="396.80" y2="322.09" stroke="#b0c0b4" stroke-width="0.5"/>
<line x1="388.33" y1="319.89" x2="391.90" y2="319.89" stroke="#b0c0b4" stroke-width="0.5"/>
<line x1="461.20" y1="315.29" x2="548.00" y2="315.29" stroke="#dcebdf" stroke-width="0.9"/>
<line x1="461.20" y1="318.49" x2="546.00" y2="318.49" stroke="#6cd69e" stroke-width="0.55"/>
<line x1="461.20" y1="323.29" x2="546.00" y2="323.29" stroke="#6cd69e" stroke-width="0.5"/>
<line x1="465.00" y1="320.62" x2="546.00" y2="320.62" stroke="#b8c8bc" stroke-width="0.6" stroke-dasharray="4 1.2"/>
<line x1="465.00" y1="316.89" x2="546.00" y2="316.89" stroke="#a8bcac" stroke-width="0.5" stroke-dasharray="3 1.5"/>
<line x1="493.35" y1="322.09" x2="497.75" y2="322.09" stroke="#a8b8ac" stroke-width="0.5"/>
<line x1="467.79" y1="319.89" x2="470.13" y2="319.89" stroke="#a8b8ac" stroke-width="0.5"/>
<line x1="496.93" y1="319.89" x2="499.48" y2="319.89" stroke="#a8b8ac" stroke-width="0.5"/>
<line x1="470.88" y1="319.89" x2="475.72" y2="319.89" stroke="#a8b8ac" stroke-width="0.5"/>
<line x1="536.07" y1="319.89" x2="541.14" y2="319.89" stroke="#a8b8ac" stroke-width="0.5"/>
<line x1="356.50" y1="304.13" x2="462.80" y2="304.13" stroke="#dcebdf" stroke-width="0.9"/>
<line x1="357.50" y1="307.92" x2="461.20" y2="307.92" stroke="#6cd69e" stroke-width="0.55"/>
<line x1="357.50" y1="312.16" x2="461.20" y2="312.16" stroke="#6cd69e" stroke-width="0.5"/>
<line x1="395.00" y1="305.13" x2="462.80" y2="305.13" stroke="#c4d4c8" stroke-width="0.65"/>
<line x1="395.00" y1="307.33" x2="461.20" y2="307.33" stroke="#b4c2b8" stroke-width="0.55" stroke-dasharray="3.2 0.9"/>
<line x1="390.85" y1="307.33" x2="395.31" y2="307.33" stroke="#b0c0b4" stroke-width="0.5"/>
<line x1="382.94" y1="310.93" x2="388.76" y2="310.93" stroke="#b0c0b4" stroke-width="0.5"/>
<line x1="374.02" y1="308.73" x2="376.51" y2="308.73" stroke="#b0c0b4" stroke-width="0.5"/>
<line x1="394.77" y1="308.73" x2="398.64" y2="308.73" stroke="#b0c0b4" stroke-width="0.5"/>
<line x1="372.29" y1="310.93" x2="374.87" y2="310.93" stroke="#b0c0b4" stroke-width="0.5"/>
<line x1="461.20" y1="304.13" x2="548.00" y2="304.13" stroke="#dcebdf" stroke-width="0.9"/>
<line x1="461.20" y1="307.48" x2="546.00" y2="307.48" stroke="#6cd69e" stroke-width="0.55"/>
<line x1="461.20" y1="312.50" x2="546.00" y2="312.50" stroke="#6cd69e" stroke-width="0.5"/>
<line x1="465.00" y1="309.71" x2="546.00" y2="309.71" stroke="#b8c8bc" stroke-width="0.6" stroke-dasharray="4 1.2"/>
<line x1="465.00" y1="305.73" x2="546.00" y2="305.73" stroke="#a8bcac" stroke-width="0.5" stroke-dasharray="3 1.5"/>
<line x1="489.38" y1="308.73" x2="492.71" y2="308.73" stroke="#a8b8ac" stroke-width="0.5"/>
<line x1="502.76" y1="310.93" x2="505.78" y2="310.93" stroke="#a8b8ac" stroke-width="0.5"/>
<line x1="474.29" y1="308.73" x2="479.00" y2="308.73" stroke="#a8b8ac" stroke-width="0.5"/>
<line x1="521.38" y1="308.73" x2="524.87" y2="308.73" stroke="#a8b8ac" stroke-width="0.5"/>
<line x1="516.61" y1="310.93" x2="519.91" y2="310.93" stroke="#a8b8ac" stroke-width="0.5"/>
<line x1="356.50" y1="293.46" x2="462.80" y2="293.46" stroke="#dcebdf" stroke-width="0.9"/>
<line x1="357.50" y1="297.09" x2="461.20" y2="297.09" stroke="#6cd69e" stroke-width="0.55"/>
<line x1="357.50" y1="301.14" x2="461.20" y2="301.14" stroke="#6cd69e" stroke-width="0.5"/>
<line x1="395.00" y1="294.46" x2="462.80" y2="294.46" stroke="#c4d4c8" stroke-width="0.65"/>
<line x1="395.00" y1="296.66" x2="461.20" y2="296.66" stroke="#b4c2b8" stroke-width="0.55" stroke-dasharray="3.2 0.9"/>
<line x1="391.97" y1="296.66" x2="395.40" y2="296.66" stroke="#b0c0b4" stroke-width="0.5"/>
<line x1="379.58" y1="298.06" x2="384.69" y2="298.06" stroke="#b0c0b4" stroke-width="0.5"/>
<line x1="383.00" y1="296.66" x2="387.46" y2="296.66" stroke="#b0c0b4" stroke-width="0.5"/>
<line x1="388.60" y1="300.26" x2="393.87" y2="300.26" stroke="#b0c0b4" stroke-width="0.5"/>
<line x1="388.51" y1="298.06" x2="391.31" y2="298.06" stroke="#b0c0b4" stroke-width="0.5"/>
<line x1="461.20" y1="293.46" x2="548.00" y2="293.46" stroke="#dcebdf" stroke-width="0.9"/>
<line x1="461.20" y1="296.66" x2="546.00" y2="296.66" stroke="#6cd69e" stroke-width="0.55"/>
<line x1="461.20" y1="301.46" x2="546.00" y2="301.46" stroke="#6cd69e" stroke-width="0.5"/>
<line x1="465.00" y1="298.80" x2="546.00" y2="298.80" stroke="#b8c8bc" stroke-width="0.6" stroke-dasharray="4 1.2"/>
<line x1="465.00" y1="295.06" x2="546.00" y2="295.06" stroke="#a8bcac" stroke-width="0.5" stroke-dasharray="3 1.5"/>
<line x1="490.38" y1="298.06" x2="492.52" y2="298.06" stroke="#a8b8ac" stroke-width="0.5"/>
<line x1="523.84" y1="298.06" x2="528.20" y2="298.06" stroke="#a8b8ac" stroke-width="0.5"/>
<line x1="516.32" y1="300.26" x2="523.11" y2="300.26" stroke="#a8b8ac" stroke-width="0.5"/>
<line x1="525.26" y1="300.26" x2="530.88" y2="300.26" stroke="#a8b8ac" stroke-width="0.5"/>
<line x1="536.54" y1="298.06" x2="540.36" y2="298.06" stroke="#a8b8ac" stroke-width="0.5"/>
<line x1="356.50" y1="282.80" x2="462.80" y2="282.80" stroke="#dcebdf" stroke-width="0.9"/>
<line x1="357.50" y1="286.43" x2="461.20" y2="286.43" stroke="#6cd69e" stroke-width="0.55"/>
<line x1="357.50" y1="290.48" x2="461.20" y2="290.48" stroke="#6cd69e" stroke-width="0.5"/>
<line x1="395.00" y1="283.80" x2="462.80" y2="283.80" stroke="#c4d4c8" stroke-width="0.65"/>
<line x1="395.00" y1="286.00" x2="461.20" y2="286.00" stroke="#b4c2b8" stroke-width="0.55" stroke-dasharray="3.2 0.9"/>
<line x1="365.37" y1="287.40" x2="369.25" y2="287.40" stroke="#b0c0b4" stroke-width="0.5"/>
<line x1="368.74" y1="289.60" x2="373.24" y2="289.60" stroke="#b0c0b4" stroke-width="0.5"/>
<line x1="389.73" y1="289.60" x2="393.65" y2="289.60" stroke="#b0c0b4" stroke-width="0.5"/>
<line x1="373.35" y1="289.60" x2="377.92" y2="289.60" stroke="#b0c0b4" stroke-width="0.5"/>
<line x1="365.96" y1="289.60" x2="369.51" y2="289.60" stroke="#b0c0b4" stroke-width="0.5"/>
<line x1="461.20" y1="282.80" x2="548.00" y2="282.80" stroke="#dcebdf" stroke-width="0.9"/>
<line x1="461.20" y1="286.00" x2="546.00" y2="286.00" stroke="#6cd69e" stroke-width="0.55"/>
<line x1="461.20" y1="290.80" x2="546.00" y2="290.80" stroke="#6cd69e" stroke-width="0.5"/>
<line x1="465.00" y1="288.13" x2="546.00" y2="288.13" stroke="#b8c8bc" stroke-width="0.6" stroke-dasharray="4 1.2"/>
<line x1="465.00" y1="284.40" x2="546.00" y2="284.40" stroke="#a8bcac" stroke-width="0.5" stroke-dasharray="3 1.5"/>
<line x1="520.76" y1="287.40" x2="525.15" y2="287.40" stroke="#a8b8ac" stroke-width="0.5"/>
<line x1="496.41" y1="287.40" x2="501.59" y2="287.40" stroke="#a8b8ac" stroke-width="0.5"/>
<line x1="524.66" y1="289.60" x2="531.52" y2="289.60" stroke="#a8b8ac" stroke-width="0.5"/>
<line x1="498.66" y1="287.40" x2="504.38" y2="287.40" stroke="#a8b8ac" stroke-width="0.5"/>
<line x1="518.81" y1="287.40" x2="521.66" y2="287.40" stroke="#a8b8ac" stroke-width="0.5"/>
<line x1="356.50" y1="271.14" x2="462.80" y2="271.14" stroke="#dcebdf" stroke-width="0.9"/>
<line x1="357.50" y1="275.11" x2="461.20" y2="275.11" stroke="#6cd69e" stroke-width="0.55"/>
<line x1="357.50" y1="279.54" x2="461.20" y2="279.54" stroke="#6cd69e" stroke-width="0.5"/>
<line x1="395.00" y1="272.14" x2="462.80" y2="272.14" stroke="#c4d4c8" stroke-width="0.65"/>
<line x1="395.00" y1="274.34" x2="461.20" y2="274.34" stroke="#b4c2b8" stroke-width="0.55" stroke-dasharray="3.2 0.9"/>
<line x1="362.91" y1="275.74" x2="367.27" y2="275.74" stroke="#b0c0b4" stroke-width="0.5"/>
<line x1="388.61" y1="277.94" x2="391.20" y2="277.94" stroke="#b0c0b4" stroke-width="0.5"/>
<line x1="394.35" y1="275.74" x2="398.98" y2="275.74" stroke="#b0c0b4" stroke-width="0.5"/>
<line x1="367.15" y1="274.34" x2="371.34" y2="274.34" stroke="#b0c0b4" stroke-width="0.5"/>
<line x1="362.47" y1="277.94" x2="368.35" y2="277.94" stroke="#b0c0b4" stroke-width="0.5"/>
<line x1="461.20" y1="271.14" x2="534.30" y2="271.14" stroke="#dcebdf" stroke-width="0.9"/>
<line x1="461.20" y1="274.64" x2="534.30" y2="274.64" stroke="#6cd69e" stroke-width="0.55"/>
<line x1="461.20" y1="279.89" x2="534.30" y2="279.89" stroke="#6cd69e" stroke-width="0.5"/>
<line x1="465.00" y1="276.97" x2="534.30" y2="276.97" stroke="#b8c8bc" stroke-width="0.6" stroke-dasharray="4 1.2"/>
<line x1="465.00" y1="272.74" x2="534.30" y2="272.74" stroke="#a8bcac" stroke-width="0.5" stroke-dasharray="3 1.5"/>
<line x1="470.91" y1="275.74" x2="476.66" y2="275.74" stroke="#a8b8ac" stroke-width="0.5"/>
<line x1="496.40" y1="275.74" x2="502.76" y2="275.74" stroke="#a8b8ac" stroke-width="0.5"/>
<line x1="465.16" y1="275.74" x2="468.22" y2="275.74" stroke="#a8b8ac" stroke-width="0.5"/>
<line x1="521.80" y1="277.94" x2="525.43" y2="277.94" stroke="#a8b8ac" stroke-width="0.5"/>
<line x1="527.23" y1="277.94" x2="529.54" y2="277.94" stroke="#a8b8ac" stroke-width="0.5"/>
<line x1="359.50" y1="260.48" x2="462.80" y2="260.48" stroke="#dcebdf" stroke-width="0.9"/>
<line x1="360.50" y1="264.11" x2="461.20" y2="264.11" stroke="#6cd69e" stroke-width="0.55"/>
<line x1="360.50" y1="268.16" x2="461.20" y2="268.16" stroke="#6cd69e" stroke-width="0.5"/>
<line x1="397.88" y1="261.48" x2="462.80" y2="261.48" stroke="#c4d4c8" stroke-width="0.65"/>
<line x1="397.88" y1="263.68" x2="461.20" y2="263.68" stroke="#b4c2b8" stroke-width="0.55" stroke-dasharray="3.2 0.9"/>
<line x1="394.21" y1="267.28" x2="398.86" y2="267.28" stroke="#b0c0b4" stroke-width="0.5"/>
<line x1="377.09" y1="267.28" x2="382.77" y2="267.28" stroke="#b0c0b4" stroke-width="0.5"/>
<line x1="366.69" y1="267.28" x2="369.30" y2="267.28" stroke="#b0c0b4" stroke-width="0.5"/>
<line x1="362.67" y1="263.68" x2="366.43" y2="263.68" stroke="#b0c0b4" stroke-width="0.5"/>
<line x1="383.84" y1="263.68" x2="388.94" y2="263.68" stroke="#b0c0b4" stroke-width="0.5"/>
<line x1="359.50" y1="250.81" x2="462.80" y2="250.81" stroke="#dcebdf" stroke-width="0.9"/>
<line x1="360.50" y1="254.10" x2="461.20" y2="254.10" stroke="#6cd69e" stroke-width="0.55"/>
<line x1="360.50" y1="257.77" x2="461.20" y2="257.77" stroke="#6cd69e" stroke-width="0.5"/>
<line x1="400.82" y1="251.81" x2="462.80" y2="251.81" stroke="#c4d4c8" stroke-width="0.65"/>
<line x1="400.82" y1="254.01" x2="461.20" y2="254.01" stroke="#b4c2b8" stroke-width="0.55" stroke-dasharray="3.2 0.9"/>
<line x1="368.69" y1="257.61" x2="372.58" y2="257.61" stroke="#b0c0b4" stroke-width="0.5"/>
<line x1="366.67" y1="257.61" x2="368.92" y2="257.61" stroke="#b0c0b4" stroke-width="0.5"/>
<line x1="382.12" y1="254.01" x2="386.34" y2="254.01" stroke="#b0c0b4" stroke-width="0.5"/>
<line x1="396.28" y1="254.01" x2="398.51" y2="254.01" stroke="#b0c0b4" stroke-width="0.5"/>
<line x1="372.75" y1="257.61" x2="377.84" y2="257.61" stroke="#b0c0b4" stroke-width="0.5"/>
<line x1="359.50" y1="241.14" x2="462.80" y2="241.14" stroke="#dcebdf" stroke-width="0.9"/>
<line x1="360.50" y1="244.42" x2="461.20" y2="244.42" stroke="#6cd69e" stroke-width="0.55"/>
<line x1="360.50" y1="248.10" x2="461.20" y2="248.10" stroke="#6cd69e" stroke-width="0.5"/>
<line x1="403.75" y1="242.14" x2="462.80" y2="242.14" stroke="#c4d4c8" stroke-width="0.65"/>
<line x1="403.75" y1="244.34" x2="461.20" y2="244.34" stroke="#b4c2b8" stroke-width="0.55" stroke-dasharray="3.2 0.9"/>
<line x1="380.88" y1="244.34" x2="382.99" y2="244.34" stroke="#b0c0b4" stroke-width="0.5"/>
<line x1="380.50" y1="247.94" x2="384.95" y2="247.94" stroke="#b0c0b4" stroke-width="0.5"/>
<line x1="387.30" y1="245.74" x2="390.10" y2="245.74" stroke="#b0c0b4" stroke-width="0.5"/>
<line x1="380.88" y1="245.74" x2="385.02" y2="245.74" stroke="#b0c0b4" stroke-width="0.5"/>
<line x1="383.20" y1="247.94" x2="386.19" y2="247.94" stroke="#b0c0b4" stroke-width="0.5"/>
<line x1="359.50" y1="231.46" x2="462.80" y2="231.46" stroke="#dcebdf" stroke-width="0.9"/>
<line x1="360.50" y1="234.75" x2="461.20" y2="234.75" stroke="#6cd69e" stroke-width="0.55"/>
<line x1="360.50" y1="238.43" x2="461.20" y2="238.43" stroke="#6cd69e" stroke-width="0.5"/>
<line x1="406.68" y1="232.46" x2="462.80" y2="232.46" stroke="#c4d4c8" stroke-width="0.65"/>
<line x1="406.68" y1="234.66" x2="461.20" y2="234.66" stroke="#b4c2b8" stroke-width="0.55" stroke-dasharray="3.2 0.9"/>
<line x1="401.16" y1="236.06" x2="406.93" y2="236.06" stroke="#b0c0b4" stroke-width="0.5"/>
<line x1="403.23" y1="234.66" x2="408.80" y2="234.66" stroke="#b0c0b4" stroke-width="0.5"/>
<line x1="399.53" y1="234.66" x2="402.08" y2="234.66" stroke="#b0c0b4" stroke-width="0.5"/>
<line x1="379.53" y1="238.26" x2="382.79" y2="238.26" stroke="#b0c0b4" stroke-width="0.5"/>
<line x1="372.75" y1="238.26" x2="375.04" y2="238.26" stroke="#b0c0b4" stroke-width="0.5"/>
<line x1="359.50" y1="221.79" x2="462.80" y2="221.79" stroke="#dcebdf" stroke-width="0.9"/>
<line x1="360.50" y1="225.08" x2="461.20" y2="225.08" stroke="#6cd69e" stroke-width="0.55"/>
<line x1="360.50" y1="228.76" x2="461.20" y2="228.76" stroke="#6cd69e" stroke-width="0.5"/>
<line x1="409.61" y1="222.79" x2="462.80" y2="222.79" stroke="#c4d4c8" stroke-width="0.65"/>
<line x1="409.61" y1="224.99" x2="461.20" y2="224.99" stroke="#b4c2b8" stroke-width="0.55" stroke-dasharray="3.2 0.9"/>
<line x1="376.41" y1="224.99" x2="378.90" y2="224.99" stroke="#b0c0b4" stroke-width="0.5"/>
<line x1="406.73" y1="226.39" x2="411.30" y2="226.39" stroke="#b0c0b4" stroke-width="0.5"/>
<line x1="368.81" y1="226.39" x2="374.34" y2="226.39" stroke="#b0c0b4" stroke-width="0.5"/>
<line x1="372.45" y1="226.39" x2="378.26" y2="226.39" stroke="#b0c0b4" stroke-width="0.5"/>
<line x1="404.13" y1="228.59" x2="406.78" y2="228.59" stroke="#b0c0b4" stroke-width="0.5"/>
<line x1="359.50" y1="212.12" x2="462.80" y2="212.12" stroke="#dcebdf" stroke-width="0.9"/>
<line x1="360.50" y1="215.41" x2="461.20" y2="215.41" stroke="#6cd69e" stroke-width="0.55"/>
<line x1="360.50" y1="219.08" x2="461.20" y2="219.08" stroke="#6cd69e" stroke-width="0.5"/>
<line x1="412.54" y1="213.12" x2="462.80" y2="213.12" stroke="#c4d4c8" stroke-width="0.65"/>
<line x1="412.54" y1="215.32" x2="461.20" y2="215.32" stroke="#b4c2b8" stroke-width="0.55" stroke-dasharray="3.2 0.9"/>
<line x1="404.07" y1="216.72" x2="406.72" y2="216.72" stroke="#b0c0b4" stroke-width="0.5"/>
<line x1="412.24" y1="216.72" x2="415.86" y2="216.72" stroke="#b0c0b4" stroke-width="0.5"/>
<line x1="371.89" y1="218.92" x2="375.17" y2="218.92" stroke="#b0c0b4" stroke-width="0.5"/>
<line x1="380.50" y1="216.72" x2="383.85" y2="216.72" stroke="#b0c0b4" stroke-width="0.5"/>
<line x1="384.26" y1="216.72" x2="386.33" y2="216.72" stroke="#b0c0b4" stroke-width="0.5"/>
<line x1="359.50" y1="202.45" x2="462.80" y2="202.45" stroke="#dcebdf" stroke-width="0.9"/>
<line x1="360.50" y1="205.74" x2="461.20" y2="205.74" stroke="#6cd69e" stroke-width="0.55"/>
<line x1="360.50" y1="209.41" x2="461.20" y2="209.41" stroke="#6cd69e" stroke-width="0.5"/>
<line x1="415.47" y1="203.45" x2="462.80" y2="203.45" stroke="#c4d4c8" stroke-width="0.65"/>
<line x1="415.47" y1="205.65" x2="461.20" y2="205.65" stroke="#b4c2b8" stroke-width="0.55" stroke-dasharray="3.2 0.9"/>
<line x1="389.67" y1="205.65" x2="392.85" y2="205.65" stroke="#b0c0b4" stroke-width="0.5"/>
<line x1="368.03" y1="205.65" x2="373.71" y2="205.65" stroke="#b0c0b4" stroke-width="0.5"/>
<line x1="413.96" y1="207.05" x2="416.38" y2="207.05" stroke="#b0c0b4" stroke-width="0.5"/>
<line x1="376.54" y1="205.65" x2="382.16" y2="205.65" stroke="#b0c0b4" stroke-width="0.5"/>
<line x1="376.46" y1="207.05" x2="378.98" y2="207.05" stroke="#b0c0b4" stroke-width="0.5"/>
<line x1="359.50" y1="192.78" x2="462.80" y2="192.78" stroke="#dcebdf" stroke-width="0.9"/>
<line x1="360.50" y1="196.06" x2="461.20" y2="196.06" stroke="#6cd69e" stroke-width="0.55"/>
<line x1="360.50" y1="199.74" x2="461.20" y2="199.74" stroke="#6cd69e" stroke-width="0.5"/>
<line x1="418.40" y1="193.78" x2="462.80" y2="193.78" stroke="#c4d4c8" stroke-width="0.65"/>
<line x1="418.40" y1="195.98" x2="461.20" y2="195.98" stroke="#b4c2b8" stroke-width="0.55" stroke-dasharray="3.2 0.9"/>
<line x1="409.92" y1="197.38" x2="414.62" y2="197.38" stroke="#b0c0b4" stroke-width="0.5"/>
<line x1="384.90" y1="199.58" x2="389.04" y2="199.58" stroke="#b0c0b4" stroke-width="0.5"/>
<line x1="394.18" y1="195.98" x2="398.98" y2="195.98" stroke="#b0c0b4" stroke-width="0.5"/>
<line x1="377.74" y1="195.98" x2="382.94" y2="195.98" stroke="#b0c0b4" stroke-width="0.5"/>
<line x1="385.99" y1="195.98" x2="388.28" y2="195.98" stroke="#b0c0b4" stroke-width="0.5"/>
<line x1="359.50" y1="183.10" x2="462.80" y2="183.10" stroke="#dcebdf" stroke-width="0.9"/>
<line x1="360.50" y1="186.39" x2="461.20" y2="186.39" stroke="#6cd69e" stroke-width="0.55"/>
<line x1="360.50" y1="190.07" x2="461.20" y2="190.07" stroke="#6cd69e" stroke-width="0.5"/>
<line x1="421.33" y1="184.10" x2="462.80" y2="184.10" stroke="#c4d4c8" stroke-width="0.65"/>
<line x1="421.33" y1="186.30" x2="461.20" y2="186.30" stroke="#b4c2b8" stroke-width="0.55" stroke-dasharray="3.2 0.9"/>
<line x1="399.64" y1="186.30" x2="404.85" y2="186.30" stroke="#b0c0b4" stroke-width="0.5"/>
<line x1="398.08" y1="187.70" x2="400.97" y2="187.70" stroke="#b0c0b4" stroke-width="0.5"/>
<line x1="413.19" y1="187.70" x2="417.01" y2="187.70" stroke="#b0c0b4" stroke-width="0.5"/>
<line x1="420.99" y1="187.70" x2="424.67" y2="187.70" stroke="#b0c0b4" stroke-width="0.5"/>
<line x1="398.89" y1="189.90" x2="401.06" y2="189.90" stroke="#b0c0b4" stroke-width="0.5"/>
<line x1="359.50" y1="173.43" x2="462.80" y2="173.43" stroke="#dcebdf" stroke-width="0.9"/>
<line x1="360.50" y1="176.72" x2="461.20" y2="176.72" stroke="#6cd69e" stroke-width="0.55"/>
<line x1="360.50" y1="180.40" x2="461.20" y2="180.40" stroke="#6cd69e" stroke-width="0.5"/>
<line x1="424.26" y1="174.43" x2="462.80" y2="174.43" stroke="#c4d4c8" stroke-width="0.65"/>
<line x1="424.26" y1="176.63" x2="461.20" y2="176.63" stroke="#b4c2b8" stroke-width="0.55" stroke-dasharray="3.2 0.9"/>
<line x1="376.85" y1="176.63" x2="379.28" y2="176.63" stroke="#b0c0b4" stroke-width="0.5"/>
<line x1="378.31" y1="178.03" x2="381.03" y2="178.03" stroke="#b0c0b4" stroke-width="0.5"/>
<line x1="401.14" y1="176.63" x2="405.27" y2="176.63" stroke="#b0c0b4" stroke-width="0.5"/>
<line x1="380.05" y1="176.63" x2="384.05" y2="176.63" stroke="#b0c0b4" stroke-width="0.5"/>
<line x1="378.84" y1="178.03" x2="384.06" y2="178.03" stroke="#b0c0b4" stroke-width="0.5"/>
<path d="M361 350.9 L354.5 354.9 L361 357.9" stroke="#c0c8c0" stroke-width="0.6" fill="none"/>
<path d="M361 340.3 L354.5 344.3 L361 347.3" stroke="#c0c8c0" stroke-width="0.6" fill="none"/>
<path d="M361 329.6 L354.5 333.6 L361 336.6" stroke="#c0c8c0" stroke-width="0.6" fill="none"/>
<path d="M546 351.9 L551 354.9 L546 357.9" stroke="#c0c8c0" stroke-width="0.6" fill="none"/>
<path d="M546 341.3 L551 344.3 L546 347.3" stroke="#c0c8c0" stroke-width="0.6" fill="none"/>
<path d="M546 330.6 L551 333.6 L546 336.6" stroke="#c0c8c0" stroke-width="0.6" fill="none"/>
<path d="M546 320.0 L551 323.0 L546 326.0" stroke="#c0c8c0" stroke-width="0.6" fill="none"/>
<line x1="362.00" y1="360.94" x2="430.00" y2="360.94" stroke="#c08040" stroke-width="0.6"/>
<line x1="360.50" y1="171.40" x2="461.20" y2="171.40" stroke="#8adcaa" stroke-width="0.8"/>
<line x1="461.20" y1="268.60" x2="534.30" y2="268.60" stroke="#d0e4d4" stroke-width="0.8"/>
<line x1="361.6" y1="171.2" x2="361.6" y2="369.6" stroke="#88e4b0" stroke-width="1.3"/>
<line x1="461" y1="171.2" x2="461" y2="268.4" stroke="#7ad8a0" stroke-width="0.8"/>
<line x1="534.3" y1="268.4" x2="534.3" y2="277.4" stroke="#7ad8a0" stroke-width="0.7"/>
<line x1="546" y1="277.4" x2="546" y2="369.6" stroke="#7ad8a0" stroke-width="0.8"/>
<line x1="534.30" y1="277.40" x2="548.00" y2="277.40" stroke="#d0e4d4" stroke-width="0.8"/>
<rect x="464.6" y="304" width="9.4" height="9" fill="none" stroke="#b040c0" stroke-width="0.6"/>
<path d="M370 171.2V164.4H378" stroke="#18c018" stroke-width="0.7" fill="none"/>
<rect x="371" y="162.70000000000002" width="7" height="1.4" fill="#d8d8d8"/>
<path d="M381.3 171.2V162.7H389" stroke="#18c018" stroke-width="0.7" fill="none"/>
<rect x="382.3" y="161.0" width="6.699999999999989" height="1.4" fill="#d8d8d8"/>
<path d="M418.5 171.2V164.4H430" stroke="#18c018" stroke-width="0.7" fill="none"/>
<rect x="419.5" y="162.70000000000002" width="10.5" height="1.4" fill="#d8d8d8"/>
<path d="M450.5 171.2V164.4H458" stroke="#18c018" stroke-width="0.7" fill="none"/>
<rect x="451.5" y="162.70000000000002" width="6.5" height="1.4" fill="#d8d8d8"/>
<path d="M481.6 268.4V261.2H488.5" stroke="#18c018" stroke-width="0.7" fill="none"/>
<rect x="482.6" y="259.5" width="5.899999999999977" height="1.4" fill="#d8d8d8"/>
<path d="M524.4 268.4V261H532" stroke="#18c018" stroke-width="0.7" fill="none"/>
<rect x="525.4" y="259.3" width="6.600000000000023" height="1.4" fill="#d8d8d8"/>
<path d="M540.5 277H550" stroke="#18c018" stroke-width="0.7" fill="none"/>
<rect x="541.5" y="275.2" width="8.5" height="1.4" fill="#d8d8d8"/>
<path d="M540.5 287.5H550" stroke="#18c018" stroke-width="0.7" fill="none"/>
<rect x="541.5" y="285.7" width="8.5" height="1.4" fill="#d8d8d8"/>
<path d="M462 216.4H470" stroke="#18c018" stroke-width="0.7" fill="none"/>
<rect x="463" y="214.6" width="7" height="1.4" fill="#d8d8d8"/>
<path d="M361 216.4H353" stroke="#18c018" stroke-width="0.7" fill="none"/>
<rect x="354" y="214.6" width="7" height="1.4" fill="#d8d8d8"/>
<line x1="364" y1="370" x2="364" y2="378" stroke="#a80000" stroke-width="0.9"/>
<line x1="364" y1="378" x2="364" y2="393.4" stroke="#18c018" stroke-width="0.7"/>
<circle cx="364" cy="395" r="1.6" fill="none" stroke="#18c018" stroke-width="0.6"/>
<line x1="382.7" y1="370" x2="382.7" y2="378" stroke="#a80000" stroke-width="0.9"/>
<line x1="382.7" y1="378" x2="382.7" y2="393.4" stroke="#18c018" stroke-width="0.7"/>
<circle cx="382.7" cy="395" r="1.6" fill="none" stroke="#18c018" stroke-width="0.6"/>
<line x1="402" y1="370" x2="402" y2="378" stroke="#a80000" stroke-width="0.9"/>
<line x1="402" y1="378" x2="402" y2="393.4" stroke="#18c018" stroke-width="0.7"/>
<circle cx="402" cy="395" r="1.6" fill="none" stroke="#18c018" stroke-width="0.6"/>
<line x1="421" y1="370" x2="421" y2="378" stroke="#a80000" stroke-width="0.9"/>
<line x1="421" y1="378" x2="421" y2="393.4" stroke="#18c018" stroke-width="0.7"/>
<circle cx="421" cy="395" r="1.6" fill="none" stroke="#18c018" stroke-width="0.6"/>
<line x1="439.3" y1="370" x2="439.3" y2="378" stroke="#a80000" stroke-width="0.9"/>
<line x1="439.3" y1="378" x2="439.3" y2="393.4" stroke="#18c018" stroke-width="0.7"/>
<circle cx="439.3" cy="395" r="1.6" fill="none" stroke="#18c018" stroke-width="0.6"/>
<line x1="458.7" y1="370" x2="458.7" y2="378" stroke="#a80000" stroke-width="0.9"/>
<line x1="458.7" y1="378" x2="458.7" y2="393.4" stroke="#18c018" stroke-width="0.7"/>
<circle cx="458.7" cy="395" r="1.6" fill="none" stroke="#18c018" stroke-width="0.6"/>
<line x1="463.5" y1="370" x2="463.5" y2="378" stroke="#a80000" stroke-width="0.9"/>
<line x1="463.5" y1="378" x2="463.5" y2="393.4" stroke="#18c018" stroke-width="0.7"/>
<circle cx="463.5" cy="395" r="1.6" fill="none" stroke="#18c018" stroke-width="0.6"/>
<line x1="483.5" y1="370" x2="483.5" y2="378" stroke="#a80000" stroke-width="0.9"/>
<line x1="483.5" y1="378" x2="483.5" y2="393.4" stroke="#18c018" stroke-width="0.7"/>
<circle cx="483.5" cy="395" r="1.6" fill="none" stroke="#18c018" stroke-width="0.6"/>
<line x1="503.7" y1="370" x2="503.7" y2="378" stroke="#a80000" stroke-width="0.9"/>
<line x1="503.7" y1="378" x2="503.7" y2="393.4" stroke="#18c018" stroke-width="0.7"/>
<circle cx="503.7" cy="395" r="1.6" fill="none" stroke="#18c018" stroke-width="0.6"/>
<line x1="523.8" y1="370" x2="523.8" y2="378" stroke="#a80000" stroke-width="0.9"/>
<line x1="523.8" y1="378" x2="523.8" y2="393.4" stroke="#18c018" stroke-width="0.7"/>
<circle cx="523.8" cy="395" r="1.6" fill="none" stroke="#18c018" stroke-width="0.6"/>
<line x1="543.6" y1="370" x2="543.6" y2="378" stroke="#a80000" stroke-width="0.9"/>
<line x1="543.6" y1="378" x2="543.6" y2="393.4" stroke="#18c018" stroke-width="0.7"/>
<circle cx="543.6" cy="395" r="1.6" fill="none" stroke="#18c018" stroke-width="0.6"/>
<line x1="364.00" y1="387.70" x2="548.00" y2="387.70" stroke="#18c018" stroke-width="0.8"/>
<line x1="364.00" y1="390.70" x2="548.00" y2="390.70" stroke="#18c018" stroke-width="0.8"/>
<rect x="373" y="387" width="3" height="1.2" fill="#ddd"/>
<rect x="392" y="387" width="3" height="1.2" fill="#ddd"/>
<rect x="411" y="387" width="3" height="1.2" fill="#ddd"/>
<rect x="430" y="387" width="3" height="1.2" fill="#ddd"/>
<rect x="449" y="387" width="3" height="1.2" fill="#ddd"/>
<rect x="473" y="387" width="3" height="1.2" fill="#ddd"/>
<rect x="493" y="387" width="3" height="1.2" fill="#ddd"/>
<rect x="513" y="387" width="3" height="1.2" fill="#ddd"/>
<rect x="533" y="387" width="3" height="1.2" fill="#ddd"/>
<rect x="417" y="402.2" width="12" height="1.6" fill="#d0d0d0"/>
<line x1="411.00" y1="405.30" x2="435.00" y2="405.30" stroke="#ddd" stroke-width="0.6"/>
<rect x="437" y="403" width="3" height="1" fill="#bbb"/>
<path d="M116.6 405.5V421.6H132.3" stroke="#1898cc" stroke-width="0.9" fill="none"/>
<path d="M118.3 400l1.6 2.2M122 400l-2.8 4.6" stroke="#1898cc" stroke-width="0.9" fill="none"/>
<path d="M134.3 416.3l3.6 3.9M137.9 416.3l-3.6 3.9" stroke="#1898cc" stroke-width="0.9" fill="none"/>
</svg>
<div id="rp" class="a"></div>
<div id="out" class="a"></div>
<div id="cmd" class="a"></div>
<svg class="a" style="left:0px;top:0px" width="27" height="26" viewBox="0 0 27 26">
<path d="M2 7.8 Q4 9.6 13.5 11.6 L24.8 7.8" stroke="#7ab82e" stroke-width="1.7" fill="none" stroke-linecap="round"/>
<path d="M2 7.8 L12.5 3.6 M7.5 9.6 L17.8 5.6" stroke="#8cc432" stroke-width="1.4" fill="none" stroke-linecap="round"/>
<path d="M2 13 Q4 15.8 15 17.6 L17.5 17.2" stroke="#1b86d2" stroke-width="1.9" fill="none" stroke-linecap="round"/>
<path d="M2 18.6 Q4 21.5 13.5 23.5 L24.8 19" stroke="#e9a21e" stroke-width="1.9" fill="none" stroke-linecap="round"/>
<path d="M17.5 10.5 L24.8 8.5 V18.8 L17.5 20.5z" fill="#eaf6fc" stroke="#3aa0d8" stroke-width=".9"/>
<path d="M19.5 12.5 L22.5 11.8 V17.2 L19.5 18 M20.5 15 L22.5 14.5" stroke="#1f7fc8" stroke-width="1" fill="none"/>
</svg>
<div class="a" style="left:26px;top:0;width:56px;height:14.5px;background:#ececec;border-bottom:1px solid #e2e2e2"></div>
<div class="t" style="left:42.5px;top:5.00px;font-size:7.4px;color:#111;font-weight:bold">建 筑</div>
<svg class="a" style="left:75.5px;top:6.5px" width="5" height="3" viewBox="0 0 5 3"><path d="M.6 .6l1.9 1.8l1.9-1.8" stroke="#aaa" stroke-width=".8" fill="none"/></svg>
<svg class="a" style="left:86px;top:3px" width="70" height="10" viewBox="0 0 70 10">
<path d="M2.5 2.5 L0.8 5 L3.3 6.5 M1 5 Q4 2.5 7.5 6.5" stroke="#1e88d8" stroke-width="1.5" fill="none"/>
<path d="M17.5 2.5 L19.2 5 L16.7 6.5 M19 5 Q16 2.5 12.5 6.5" stroke="#1e88d8" stroke-width="1.5" fill="none"/>
<path d="M24.5 1.5h5l1.5 1.5v5.5h-6.5z M26 1.5v2h3v-2 M26 8.5v-2.5h3.5v2.5" stroke="#1e88d8" stroke-width="1" fill="none"/>
<path d="M35.5 1.5h5l1.5 1.5v5.5h-6.5z M37 1.5v2h3v-2 M39 6.5h4 M41.5 5l1.5 1.5l-1.5 1.5" stroke="#1e88d8" stroke-width="1" fill="none"/>
<path d="M47.5 1.5l6 6.5 M53.5 1.5l-6 6.5" stroke="#1e88d8" stroke-width="1.3"/>
<path d="M59.5 2h6v6.5h-6.5z M61 5l1.5 1.5l3.5-4.5" stroke="#1e88d8" stroke-width="1" fill="none"/>
</svg>
<div class="t" style="left:343px;top:5.93px;font-size:5.95px;color:#3a3a3a;">CSWADI EasyBIM V5.0 - [E:\工作\七院项目\立面模型0425.eb]</div>
<svg class="a" style="left:662px;top:1.5px" width="13" height="12" viewBox="0 0 13 12"><path d="M3.5 4V2.3h8.2v5.5h-1" fill="none" stroke="#e24a9c" stroke-width="1"/><path d="M1.2 4.3h8.2v5.8h-5.5l-2.2 1.8v-1.8h-.5z" fill="#fff" stroke="#e24a9c" stroke-width="1.1"/><circle cx="3.6" cy="7.2" r=".55" fill="#e24a9c"/><circle cx="5.3" cy="7.2" r=".55" fill="#e24a9c"/><circle cx="7" cy="7.2" r=".55" fill="#e24a9c"/></svg>
<div class="t" style="left:677px;top:5.20px;font-size:7px;color:#1a1a1a;font-weight:bold">AI</div>
<svg class="a" style="left:703.5px;top:3px" width="10" height="10" viewBox="0 0 10 10"><circle cx="5" cy="5" r="4.5" fill="#1a8ee0"/><rect x="4.4" y="4" width="1.3" height="3.8" fill="#fff"/><circle cx="5" cy="2.6" r=".75" fill="#fff"/></svg>
<div class="t" style="left:717px;top:5.65px;font-size:6.5px;color:#333;">帮助</div>
<svg class="a" style="left:746px;top:0.5px" width="12" height="14" viewBox="0 0 12 14"><path d="M3 9.5l-1 3l2-.6l1.2 1.2l.8-3zM9 9.5l1 3l-2-.6l-1.2 1.2l-.8-3z" fill="#5cb85c"/><circle cx="6" cy="5.5" r="4.8" fill="#e05555"/><circle cx="6" cy="5.5" r="3.6" fill="none" stroke="#c43c3c" stroke-width=".5"/><path d="M5.2 3.8l1-.6v4.6" stroke="#b03030" stroke-width=".8" fill="none"/></svg>
<div class="t" style="left:762px;top:5.65px;font-size:6.5px;color:#333;">贡献</div>
<svg class="a" style="left:789.5px;top:0.5px" width="15" height="15" viewBox="0 0 15 15"><circle cx="7.5" cy="7.5" r="7.2" fill="#b8b0a8"/><circle cx="7.5" cy="7.5" r="6.2" fill="#f4f0ec"/><path d="M4 13.5q3.5-2.5 7 0" fill="#333"/><ellipse cx="7.5" cy="8.3" rx="3.6" ry="4" fill="#f2cdb0"/><path d="M3.2 8 Q2.8 2.2 7.8 2.3 Q12.5 2.5 11.8 8 Q11 5 8.5 5.2 Q7 6.2 4.5 5.5z" fill="#1c1c1c"/><circle cx="6" cy="8.6" r=".55" fill="#222"/><circle cx="9" cy="8.6" r=".55" fill="#222"/></svg>
<div class="t" style="left:806.5px;top:5.65px;font-size:6.5px;color:#333;">杨阳</div>
<div class="a" style="left:843px;top:7.5px;width:7px;height:1px;background:#444"></div>
<svg class="a" style="left:864px;top:3.5px" width="8" height="8" viewBox="0 0 8 8"><rect x="0.5" y="2" width="5.5" height="5.5" fill="none" stroke="#444" stroke-width=".9"/><path d="M2 2V0.8h5v5H6" fill="none" stroke="#444" stroke-width=".9"/></svg>
<svg class="a" style="left:886.5px;top:3.5px" width="8" height="8" viewBox="0 0 8 8"><path d="M.8 .8l6.4 6.4M7.2 .8l-6.4 6.4" stroke="#444" stroke-width=".9"/></svg>
<div class="a" style="left:26px;top:14.5px;width:29px;height:12px;background:#fff;border-left:1px solid #e0e0e0;border-right:1px solid #e0e0e0"></div>
<div class="t" style="left:28px;top:18.50px;font-size:6.0px;color:#4a9bf2;-webkit-text-stroke:0.06px #4a9bf2">设计建模</div>
<div class="t" style="left:58px;top:18.50px;font-size:6.0px;color:#222;-webkit-text-stroke:0.06px #222">绘图标注</div>
<div class="t" style="left:88px;top:18.50px;font-size:6.0px;color:#222;-webkit-text-stroke:0.06px #222">工具管理</div>
<div class="t" style="left:118px;top:18.50px;font-size:6.0px;color:#222;-webkit-text-stroke:0.06px #222">数据交互</div>
<div class="t" style="left:148px;top:18.50px;font-size:6.0px;color:#222;-webkit-text-stroke:0.06px #222">模型查看</div>
<div class="t" style="left:178px;top:18.50px;font-size:6.0px;color:#222;-webkit-text-stroke:0.06px #222">图纸视图</div>
<div class="t" style="left:208px;top:18.50px;font-size:6.0px;color:#222;-webkit-text-stroke:0.06px #222">协同设计</div>
<div class="t" style="left:238px;top:18.50px;font-size:6.0px;color:#222;-webkit-text-stroke:0.06px #222">二次开发</div>
<div class="t" style="left:268px;top:18.50px;font-size:6.0px;color:#222;-webkit-text-stroke:0.06px #222">修改</div>
<div class="t" style="left:287px;top:18.50px;font-size:6.0px;color:#222;-webkit-text-stroke:0.06px #222">几何形体</div>
<div class="t" style="left:317px;top:18.50px;font-size:6.0px;color:#222;-webkit-text-stroke:0.06px #222">测试</div>
<div class="a" style="left:84.5px;top:28px;width:1px;height:40px;background:#dcdcdc"></div>
<div class="a" style="left:173.5px;top:28px;width:1px;height:40px;background:#dcdcdc"></div>
<div class="a" style="left:227px;top:28px;width:1px;height:40px;background:#dcdcdc"></div>
<div class="a" style="left:283px;top:28px;width:1px;height:40px;background:#dcdcdc"></div>
<div class="a" style="left:353px;top:28px;width:1px;height:40px;background:#dcdcdc"></div>
<div class="a" style="left:420.5px;top:28px;width:1px;height:40px;background:#dcdcdc"></div>
<div class="a" style="left:473.3px;top:28px;width:1px;height:40px;background:#dcdcdc"></div>
<div class="a" style="left:528.5px;top:28px;width:1px;height:40px;background:#dcdcdc"></div>
<div class="a" style="left:600.5px;top:28px;width:1px;height:40px;background:#dcdcdc"></div>
<div class="a" style="left:652px;top:28px;width:1px;height:40px;background:#dcdcdc"></div>
<div class="a" style="left:677px;top:28px;width:1px;height:40px;background:#dcdcdc"></div>
<div class="t" style="left:12.50px;width:60px;text-align:center;top:62.55px;font-size:5.9px;color:#8a8a8a;">建模基准</div>
<div class="t" style="left:99.00px;width:60px;text-align:center;top:62.55px;font-size:5.9px;color:#8a8a8a;">墙柱梁板</div>
<div class="t" style="left:169.50px;width:60px;text-align:center;top:62.55px;font-size:5.9px;color:#8a8a8a;">门窗幕墙</div>
<div class="t" style="left:225.50px;width:60px;text-align:center;top:62.55px;font-size:5.9px;color:#8a8a8a;">天花屋顶</div>
<div class="t" style="left:289.00px;width:60px;text-align:center;top:62.55px;font-size:5.9px;color:#8a8a8a;">房间面积</div>
<div class="t" style="left:357.50px;width:60px;text-align:center;top:62.55px;font-size:5.9px;color:#8a8a8a;">楼梯栏杆</div>
<div class="t" style="left:417.00px;width:60px;text-align:center;top:62.55px;font-size:5.9px;color:#8a8a8a;">台阶坡道</div>
<div class="t" style="left:470.50px;width:60px;text-align:center;top:62.55px;font-size:5.9px;color:#8a8a8a;">电梯扶梯</div>
<div class="t" style="left:534.50px;width:60px;text-align:center;top:62.55px;font-size:5.9px;color:#8a8a8a;">附属构件</div>
<div class="t" style="left:596.50px;width:60px;text-align:center;top:62.55px;font-size:5.9px;color:#8a8a8a;">建模扩展</div>
<div class="t" style="left:634.50px;width:60px;text-align:center;top:62.55px;font-size:5.9px;color:#8a8a8a;">场地设计</div>
<div class="t" style="left:-19.50px;width:60px;text-align:center;top:44.65px;font-size:6.1px;color:#222;-webkit-text-stroke:0.13px #222">楼层</div>
<div class="t" style="left:-19.50px;width:60px;text-align:center;top:51.55px;font-size:6.1px;color:#222;-webkit-text-stroke:0.13px #222">管理</div>
<div class="t" style="left:-1.50px;width:60px;text-align:center;top:44.65px;font-size:6.1px;color:#222;-webkit-text-stroke:0.13px #222">标准层</div>
<svg class="a" style="left:26.5px;top:53px" width="4" height="3" viewBox="0 0 4 3"><path d="M0 0h4l-2 2.4z" fill="#333"/></svg>
<div class="t" style="left:17.00px;width:60px;text-align:center;top:44.65px;font-size:6.1px;color:#222;-webkit-text-stroke:0.13px #222">轴网</div>
<div class="t" style="left:17.00px;width:60px;text-align:center;top:51.55px;font-size:6.1px;color:#222;-webkit-text-stroke:0.13px #222">视图</div>
<div class="t" style="left:39.00px;width:60px;text-align:center;top:44.65px;font-size:6.1px;color:#222;-webkit-text-stroke:0.13px #222">绘制轴网</div>
<svg class="a" style="left:67px;top:53px" width="4" height="3" viewBox="0 0 4 3"><path d="M0 0h4l-2 2.4z" fill="#333"/></svg>
<div class="t" style="left:65.50px;width:60px;text-align:center;top:44.65px;font-size:6.1px;color:#222;-webkit-text-stroke:0.13px #222">墙</div>
<svg class="a" style="left:93.5px;top:53px" width="4" height="3" viewBox="0 0 4 3"><path d="M0 0h4l-2 2.4z" fill="#333"/></svg>
<div class="t" style="left:81.00px;width:60px;text-align:center;top:44.65px;font-size:6.1px;color:#222;-webkit-text-stroke:0.13px #222">柱</div>
<svg class="a" style="left:109px;top:53px" width="4" height="3" viewBox="0 0 4 3"><path d="M0 0h4l-2 2.4z" fill="#333"/></svg>
<div class="t" style="left:99.00px;width:60px;text-align:center;top:44.65px;font-size:6.1px;color:#222;-webkit-text-stroke:0.13px #222">楼板</div>
<svg class="a" style="left:127px;top:53px" width="4" height="3" viewBox="0 0 4 3"><path d="M0 0h4l-2 2.4z" fill="#333"/></svg>
<div class="t" style="left:116.00px;width:60px;text-align:center;top:44.65px;font-size:6.1px;color:#222;-webkit-text-stroke:0.13px #222">降板</div>
<svg class="a" style="left:144px;top:53px" width="4" height="3" viewBox="0 0 4 3"><path d="M0 0h4l-2 2.4z" fill="#333"/></svg>
<div class="t" style="left:132.50px;width:60px;text-align:center;top:44.65px;font-size:6.1px;color:#222;-webkit-text-stroke:0.13px #222">梁</div>
<svg class="a" style="left:160.5px;top:53px" width="4" height="3" viewBox="0 0 4 3"><path d="M0 0h4l-2 2.4z" fill="#333"/></svg>
<div class="t" style="left:153.50px;width:60px;text-align:center;top:44.65px;font-size:6.1px;color:#222;-webkit-text-stroke:0.13px #222">门</div>
<svg class="a" style="left:181.5px;top:53px" width="4" height="3" viewBox="0 0 4 3"><path d="M0 0h4l-2 2.4z" fill="#333"/></svg>
<div class="t" style="left:170.50px;width:60px;text-align:center;top:44.65px;font-size:6.1px;color:#222;-webkit-text-stroke:0.13px #222">窗</div>
<svg class="a" style="left:198.5px;top:53px" width="4" height="3" viewBox="0 0 4 3"><path d="M0 0h4l-2 2.4z" fill="#333"/></svg>
<div class="t" style="left:187.50px;width:60px;text-align:center;top:44.65px;font-size:6.1px;color:#222;-webkit-text-stroke:0.13px #222">幕墙</div>
<svg class="a" style="left:215.5px;top:53px" width="4" height="3" viewBox="0 0 4 3"><path d="M0 0h4l-2 2.4z" fill="#333"/></svg>
<div class="t" style="left:207.50px;width:60px;text-align:center;top:44.65px;font-size:6.1px;color:#222;-webkit-text-stroke:0.13px #222">天花</div>
<div class="t" style="left:225.50px;width:60px;text-align:center;top:44.65px;font-size:6.1px;color:#222;-webkit-text-stroke:0.13px #222">坡屋顶</div>
<div class="t" style="left:244.00px;width:60px;text-align:center;top:44.65px;font-size:6.1px;color:#222;-webkit-text-stroke:0.13px #222">折板</div>
<svg class="a" style="left:272px;top:53px" width="4" height="3" viewBox="0 0 4 3"><path d="M0 0h4l-2 2.4z" fill="#333"/></svg>
<div class="t" style="left:264.50px;width:60px;text-align:center;top:44.65px;font-size:6.1px;color:#222;-webkit-text-stroke:0.13px #222">房间</div>
<svg class="a" style="left:292.5px;top:53px" width="4" height="3" viewBox="0 0 4 3"><path d="M0 0h4l-2 2.4z" fill="#333"/></svg>
<div class="t" style="left:280.50px;width:60px;text-align:center;top:44.65px;font-size:6.1px;color:#222;-webkit-text-stroke:0.13px #222">房间</div>
<div class="t" style="left:280.50px;width:60px;text-align:center;top:51.55px;font-size:6.1px;color:#222;-webkit-text-stroke:0.13px #222">分隔</div>
<div class="t" style="left:297.00px;width:60px;text-align:center;top:44.65px;font-size:6.1px;color:#222;-webkit-text-stroke:0.13px #222">面积</div>
<svg class="a" style="left:325px;top:53px" width="4" height="3" viewBox="0 0 4 3"><path d="M0 0h4l-2 2.4z" fill="#333"/></svg>
<div class="t" style="left:313.50px;width:60px;text-align:center;top:44.65px;font-size:6.1px;color:#222;-webkit-text-stroke:0.13px #222">面积</div>
<div class="t" style="left:313.50px;width:60px;text-align:center;top:51.55px;font-size:6.1px;color:#222;-webkit-text-stroke:0.13px #222">边界</div>
<div class="t" style="left:333.50px;width:60px;text-align:center;top:44.65px;font-size:6.1px;color:#222;-webkit-text-stroke:0.13px #222">折跑</div>
<div class="t" style="left:333.50px;width:60px;text-align:center;top:51.55px;font-size:6.1px;color:#222;-webkit-text-stroke:0.13px #222">楼梯</div>
<div class="t" style="left:349.50px;width:60px;text-align:center;top:44.65px;font-size:6.1px;color:#222;-webkit-text-stroke:0.13px #222">层间</div>
<div class="t" style="left:349.50px;width:60px;text-align:center;top:51.55px;font-size:6.1px;color:#222;-webkit-text-stroke:0.13px #222">多跑</div>
<div class="t" style="left:365.50px;width:60px;text-align:center;top:44.65px;font-size:6.1px;color:#222;-webkit-text-stroke:0.13px #222">圆弧</div>
<div class="t" style="left:365.50px;width:60px;text-align:center;top:51.55px;font-size:6.1px;color:#222;-webkit-text-stroke:0.13px #222">梯段</div>
<div class="t" style="left:381.50px;width:60px;text-align:center;top:44.65px;font-size:6.1px;color:#222;-webkit-text-stroke:0.13px #222">栏杆</div>
<div class="t" style="left:401.50px;width:60px;text-align:center;top:44.65px;font-size:6.1px;color:#222;-webkit-text-stroke:0.13px #222">台阶</div>
<svg class="a" style="left:429.5px;top:53px" width="4" height="3" viewBox="0 0 4 3"><path d="M0 0h4l-2 2.4z" fill="#333"/></svg>
<div class="t" style="left:417.50px;width:60px;text-align:center;top:44.65px;font-size:6.1px;color:#222;-webkit-text-stroke:0.13px #222">人行</div>
<div class="t" style="left:417.50px;width:60px;text-align:center;top:51.55px;font-size:6.1px;color:#222;-webkit-text-stroke:0.13px #222">坡道</div>
<div class="t" style="left:433.50px;width:60px;text-align:center;top:44.65px;font-size:6.1px;color:#222;-webkit-text-stroke:0.13px #222">汽车</div>
<div class="t" style="left:433.50px;width:60px;text-align:center;top:51.55px;font-size:6.1px;color:#222;-webkit-text-stroke:0.13px #222">坡道</div>
<div class="t" style="left:453.00px;width:60px;text-align:center;top:44.65px;font-size:6.1px;color:#222;-webkit-text-stroke:0.13px #222">电梯</div>
<div class="t" style="left:469.50px;width:60px;text-align:center;top:44.65px;font-size:6.1px;color:#222;-webkit-text-stroke:0.13px #222">自动</div>
<div class="t" style="left:469.50px;width:60px;text-align:center;top:51.55px;font-size:6.1px;color:#222;-webkit-text-stroke:0.13px #222">扶梯</div>
<div class="t" style="left:487.00px;width:60px;text-align:center;top:44.65px;font-size:6.1px;color:#222;-webkit-text-stroke:0.13px #222">自动</div>
<div class="t" style="left:487.00px;width:60px;text-align:center;top:51.55px;font-size:6.1px;color:#222;-webkit-text-stroke:0.13px #222">人行道</div>
<div class="t" style="left:509.00px;width:60px;text-align:center;top:44.65px;font-size:6.1px;color:#222;-webkit-text-stroke:0.13px #222">板洞</div>
<svg class="a" style="left:537px;top:53px" width="4" height="3" viewBox="0 0 4 3"><path d="M0 0h4l-2 2.4z" fill="#333"/></svg>
<div class="t" style="left:525.50px;width:60px;text-align:center;top:44.65px;font-size:6.1px;color:#222;-webkit-text-stroke:0.13px #222">墙洞</div>
<div class="t" style="left:541.50px;width:60px;text-align:center;top:44.65px;font-size:6.1px;color:#222;-webkit-text-stroke:0.13px #222">散水</div>
<div class="t" style="left:559.00px;width:60px;text-align:center;top:44.65px;font-size:6.1px;color:#222;-webkit-text-stroke:0.13px #222">排水沟</div>
<div class="t" style="left:581.00px;width:60px;text-align:center;top:44.65px;font-size:6.1px;color:#222;-webkit-text-stroke:0.13px #222">节点</div>
<div class="t" style="left:596.50px;width:60px;text-align:center;top:44.65px;font-size:6.1px;color:#222;-webkit-text-stroke:0.13px #222">识图</div>
<div class="t" style="left:596.50px;width:60px;text-align:center;top:51.55px;font-size:6.1px;color:#222;-webkit-text-stroke:0.13px #222">成模</div>
<div class="t" style="left:612.50px;width:60px;text-align:center;top:44.65px;font-size:6.1px;color:#222;-webkit-text-stroke:0.13px #222">体量</div>
<div class="t" style="left:612.50px;width:60px;text-align:center;top:51.55px;font-size:6.1px;color:#222;-webkit-text-stroke:0.13px #222">建模</div>
<div class="t" style="left:634.00px;width:60px;text-align:center;top:44.65px;font-size:6.1px;color:#222;-webkit-text-stroke:0.13px #222">控制线</div>
<svg class="a" style="left:3.00px;top:27.5px" width="15" height="14" viewBox="0 0 15 14"><path d="M1 9l6.5 3.5l6.5-3.5l-6.5-3.5z" fill="#7ab0e0"/><path d="M1 10.5l6.5 3.5l6.5-3.5" stroke="#7ab0e0" stroke-width="1" fill="none"/>
<path d="M1 5.5l6.5-4l6.5 4l-6.5 4z" fill="#e8eef2" stroke="#777" stroke-width=".8"/></svg>
<svg class="a" style="left:21.00px;top:27.5px" width="15" height="14" viewBox="0 0 15 14"><rect x="1.5" y="1" width="12" height="11" rx="1" fill="#f4f4f4" stroke="#777" stroke-width="1"/><path d="M3.5 3.5h8M3.5 5.5h8M3.5 7.5h8" stroke="#999" stroke-width=".9"/><rect x="2" y="10.5" width="11" height="1.5" fill="#8ccf70"/></svg>
<svg class="a" style="left:39.50px;top:27.5px" width="15" height="14" viewBox="0 0 15 14"><rect x="1" y="1" width="12" height="11.5" fill="#f6f6f6" stroke="#777" stroke-width="1"/><path d="M4 9l5.5-6l1.5 1.5l-5.5 6z" fill="#5ab040"/><path d="M11 9.5h3.5M12.8 7.8v3.5" stroke="#222" stroke-width="1.2"/></svg>
<svg class="a" style="left:61.50px;top:27.5px" width="15" height="14" viewBox="0 0 15 14"><rect x="1" y="1" width="12" height="11.5" fill="#f6f6f6" stroke="#777" stroke-width="1"/><path d="M4 9l5.5-6l1.5 1.5l-5.5 6z" fill="#5ab040"/><path d="M11 9.5h3.5M12.8 7.8v3.5" stroke="#222" stroke-width="1.2"/></svg>
<svg class="a" style="left:88.00px;top:27.5px" width="15" height="14" viewBox="0 0 15 14"><path d="M2 1.5l9 1l1 11l-9-1.5z" fill="#9cc8e8" stroke="#3a78a8" stroke-width=".8"/><path d="M2 1.5l1 10.5" stroke="#5a98c8" stroke-width=".8"/></svg>
<svg class="a" style="left:103.50px;top:27.5px" width="15" height="14" viewBox="0 0 15 14"><path d="M5.5 2.5l3.5-1.5v10.5l-3.5 1.5z" fill="#9cc8e8" stroke="#3a78a8" stroke-width=".8"/></svg>
<svg class="a" style="left:121.50px;top:27.5px" width="15" height="14" viewBox="0 0 15 14"><path d="M1.5 5.5l4-4h8v7l-4 4h-8z" fill="#f6f6f6" stroke="#888" stroke-width=".8"/><path d="M1.5 9l4-3.5h8l-4 3.5z" fill="#9cc8e8" stroke="#5a98c8" stroke-width=".6"/></svg>
<svg class="a" style="left:138.50px;top:27.5px" width="15" height="14" viewBox="0 0 15 14"><path d="M0 5h4v3.5h7v-3.5h4" stroke="#555" stroke-width="1.3" fill="none"/></svg>
<svg class="a" style="left:155.00px;top:27.5px" width="15" height="14" viewBox="0 0 15 14"><path d="M1.5 4.5l2-2h10v6l-2 2h-10z" fill="#e8e8e8" stroke="#777" stroke-width=".8"/><path d="M1.5 4.5h10v6" stroke="#999" stroke-width=".6" fill="none"/></svg>
<svg class="a" style="left:176.00px;top:27.5px" width="15" height="14" viewBox="0 0 15 14"><path d="M3.5 1.5l7 1.5v10l-7-1.5z" fill="#9cc8e8" stroke="#555" stroke-width=".8"/></svg>
<svg class="a" style="left:193.00px;top:27.5px" width="15" height="14" viewBox="0 0 15 14"><rect x="2.5" y="1.5" width="10" height="11" fill="#9cc8e8" stroke="#777" stroke-width=".9"/><path d="M7.5 1.5v11M2.5 7h10" stroke="#e6f2fa" stroke-width=".7"/></svg>
<svg class="a" style="left:210.00px;top:27.5px" width="15" height="14" viewBox="0 0 15 14"><path d="M1.5 1.5l6 2v10l-6-2z M7.5 3.5l6-2v10l-6 2z" fill="#dceeff" stroke="#3a70d0" stroke-width=".8"/><path d="M1.5 5l6 2l6-2M1.5 8.5l6 2l6-2M4.5 2.5v10M10.5 2.5v10" stroke="#3a70d0" stroke-width=".6" fill="none"/></svg>
<svg class="a" style="left:230.00px;top:27.5px" width="15" height="14" viewBox="0 0 15 14"><path d="M1.5 4l6-3l6 3v7l-6 3l-6-3z" fill="#fff" stroke="#666" stroke-width=".9"/><path d="M1.5 4l6 3l6-3l-6-3z" fill="#888"/><path d="M7.5 7v7" stroke="#666" stroke-width=".8"/></svg>
<svg class="a" style="left:248.00px;top:27.5px" width="15" height="14" viewBox="0 0 15 14"><path d="M2 2h11v4h-7v7h-4z" fill="#dde8f0" stroke="#9ab" stroke-width=".8"/></svg>
<svg class="a" style="left:266.50px;top:27.5px" width="15" height="14" viewBox="0 0 15 14"><rect x="1.5" y="1.5" width="12" height="11" fill="#a8d4f0" stroke="#4a88b8" stroke-width=".6"/><path d="M1.5 1.5l3 4h6l3-4z" fill="#3a88c0"/></svg>
<svg class="a" style="left:287.00px;top:27.5px" width="15" height="14" viewBox="0 0 15 14"><rect x="1" y="1" width="13" height="12" fill="#fff" stroke="#777" stroke-width=".8"/><rect x="3.5" y="4" width="10.5" height="9" fill="#9cd0ea"/><path d="M3.5 4l10.5 9M14 4l-10.5 9" stroke="#444" stroke-width=".7"/></svg>
<svg class="a" style="left:303.00px;top:27.5px" width="15" height="14" viewBox="0 0 15 14"><rect x="1" y="1" width="13" height="12" fill="#fff" stroke="#777" stroke-width=".8"/><rect x="5" y="8" width="9" height="5" fill="#9cd0ea"/><path d="M5 8l9 5M14 8l-9 5" stroke="#444" stroke-width=".7"/><path d="M6 8l7-6.5" stroke="#e88a20" stroke-width="2"/></svg>
<svg class="a" style="left:319.50px;top:27.5px" width="15" height="14" viewBox="0 0 15 14"><rect x="1" y="1" width="13" height="12" fill="#fbe27a" stroke="#777" stroke-width=".8"/><path d="M1 1l13 12M14 1l-13 12" stroke="#444" stroke-width=".7"/></svg>
<svg class="a" style="left:336.00px;top:27.5px" width="15" height="14" viewBox="0 0 15 14"><rect x="1" y="1" width="13" height="12" fill="#fbe27a" stroke="#777" stroke-width=".8"/><path d="M1 1l13 12M6 1l-5 8" stroke="#444" stroke-width=".7"/><path d="M6 11l7-7" stroke="#e88a20" stroke-width="2"/></svg>
<svg class="a" style="left:356.00px;top:27.5px" width="15" height="14" viewBox="0 0 15 14"><path d="M1.5 8l5-6l7 5l-5 6z" fill="#f4f4f4" stroke="#2a5a78" stroke-width=".8"/><path d="M3 9.5l5-6M5 11l5-6M7 12.5l5-6" stroke="#2a5a78" stroke-width="1"/></svg>
<svg class="a" style="left:372.00px;top:27.5px" width="15" height="14" viewBox="0 0 15 14"><path d="M1.5 8l5-6l7 5l-5 6z" fill="#f4f4f4" stroke="#2a5a78" stroke-width=".8"/><path d="M3 9.5l5-6M5 11l5-6M7 12.5l5-6" stroke="#2a5a78" stroke-width="1"/></svg>
<svg class="a" style="left:388.00px;top:27.5px" width="15" height="14" viewBox="0 0 15 14"><path d="M2 8a5.5 5.5 0 1 1 9 4" stroke="#2a88c8" stroke-width="3" fill="none"/><path d="M2 8a5.5 5.5 0 1 1 9 4" stroke="#fff" stroke-width="1.2" stroke-dasharray="1 1" fill="none"/></svg>
<svg class="a" style="left:404.00px;top:27.5px" width="15" height="14" viewBox="0 0 15 14"><rect x="1.5" y="2" width="12" height="10" fill="#cfe4f8"/><path d="M1.5 2.8h12M1.5 6h12M1.5 11.2h12M3 2v10M5.2 2v10M7.4 2v10M9.6 2v10M11.8 2v10" stroke="#4a88d0" stroke-width=".8"/></svg>
<svg class="a" style="left:424.00px;top:27.5px" width="15" height="14" viewBox="0 0 15 14"><path d="M2 12l2-10h10l-2 10z" fill="#f4f4f4" stroke="#555" stroke-width=".8"/><path d="M3 9.5h9.5M3.5 7h9.5M4 4.5h9.5" stroke="#555" stroke-width=".8"/></svg>
<svg class="a" style="left:440.00px;top:27.5px" width="15" height="14" viewBox="0 0 15 14"><path d="M1 9l6-8l7 4l-6 8z" fill="#f4f4f4" stroke="#555" stroke-width=".8"/><path d="M8 13l6-8v3z" fill="#a8d0ea"/></svg>
<svg class="a" style="left:456.00px;top:27.5px" width="15" height="14" viewBox="0 0 15 14"><path d="M1 9l6-8l7 4l-6 8z" fill="#f4f4f4" stroke="#555" stroke-width=".8"/><path d="M8 13l6-8v3z" fill="#a8d0ea"/></svg>
<svg class="a" style="left:475.50px;top:27.5px" width="15" height="14" viewBox="0 0 15 14"><rect x="1.5" y="1" width="12" height="12" fill="#9cd0f8" stroke="#68b0e8" stroke-width=".6"/><path d="M5 2.5v10M10 2.5v10" stroke="#fff" stroke-width="1"/></svg>
<svg class="a" style="left:492.00px;top:27.5px" width="15" height="14" viewBox="0 0 15 14"><path d="M1 11l4-1l5-6l4-1v3l-4 1l-5 6l-4 1z" fill="#6a9ab8" stroke="#4a7a98" stroke-width=".6"/></svg>
<svg class="a" style="left:509.50px;top:27.5px" width="15" height="14" viewBox="0 0 15 14"><path d="M1 7l3-2h10l-3 2z" fill="#a8d8d8" stroke="#5a9aa8" stroke-width=".6"/></svg>
<svg class="a" style="left:531.50px;top:27.5px" width="15" height="14" viewBox="0 0 15 14"><rect x="1" y="1" width="13" height="12" fill="#f6f6f6" stroke="#888" stroke-width=".8"/><path d="M3 12Q4 4 12 3" stroke="#4a90c0" stroke-width="1" fill="none"/></svg>
<svg class="a" style="left:548.00px;top:27.5px" width="15" height="14" viewBox="0 0 15 14"><rect x="1" y="3" width="13" height="8" fill="#f6f6f6" stroke="#888" stroke-width=".8"/><path d="M3 9Q4 6 12 5.5v3z" fill="#a8d4ea" stroke="#4a90c0" stroke-width=".5"/></svg>
<svg class="a" style="left:564.00px;top:27.5px" width="15" height="14" viewBox="0 0 15 14"><rect x="1" y="4" width="13" height="9" fill="#c8e0f4" stroke="#5a90c0" stroke-width=".7"/><path d="M1 4l6.5 5l6.5-5M4 1.5l3.5 3l3.5-3" stroke="#5a90c0" stroke-width=".8" fill="none"/></svg>
<svg class="a" style="left:581.50px;top:27.5px" width="15" height="14" viewBox="0 0 15 14"><path d="M1.5 2l2 11h2l-1-11z M11 2l2.5 0l-1.5 11h-2z" fill="#c8dcea" stroke="#88a" stroke-width=".5"/><path d="M5 5q1.5-1 3 0t3 0M5 7.5q1.5-1 3 0t3 0M5 10q1.5-1 3 0t3 0" stroke="#777" stroke-width=".7" fill="none"/></svg>
<svg class="a" style="left:603.50px;top:27.5px" width="15" height="14" viewBox="0 0 15 14"><path d="M1 2l5-1v12l-5-1z" fill="#8a8a8a"/><path d="M6 1l7 1.5v2l-5 0v6l5 0v2l-7 1z" fill="#c8c8c8" stroke="#555" stroke-width=".6"/></svg>
<svg class="a" style="left:619.00px;top:27.5px" width="15" height="14" viewBox="0 0 15 14"><path d="M1 7l6.5-4l6.5 4l-6.5 4z" fill="#ddd" stroke="#333" stroke-width=".8"/><path d="M1 9l6.5 4l6.5-4" stroke="#333" stroke-width=".8" fill="none"/><rect x="5" y="5" width="5" height="4" fill="#666"/></svg>
<svg class="a" style="left:635.00px;top:27.5px" width="15" height="14" viewBox="0 0 15 14"><circle cx="7.5" cy="6.5" r="6" fill="#7a7a7a"/><text x="7.5" y="8.2" font-size="4" font-family="Liberation Sans" font-weight="bold" text-anchor="middle" fill="#eee">TEST</text></svg>
<svg class="a" style="left:656.50px;top:27.5px" width="15" height="14" viewBox="0 0 15 14"><path d="M2 2h11v4h-7v7h-4z" fill="#a8d8f4" stroke="#5aa0d0" stroke-width=".8"/></svg>
<div class="t" style="left:2px;top:73.80px;font-size:6.2px;color:#222;-webkit-text-stroke:0.12px #222">属性</div>
<svg class="a" style="left:68px;top:73px" width="26" height="7" viewBox="0 0 26 7"><path d="M0.5 2h4l-2 2.5z" fill="#222"/><path d="M10.5 1v3.5M9 4.5h3M11 4.5v2" stroke="#333" stroke-width=".9"/><path d="M17.5 1l4.5 4.5M22 1l-4.5 4.5" stroke="#222" stroke-width="1"/></svg>
<div class="t" style="left:7px;top:85.15px;font-size:6.1px;color:#2a2a2a;-webkit-text-stroke:0.14px #2a2a2a">平面视图</div>
<div class="t" style="left:7px;top:93.75px;font-size:6.1px;color:#2a2a2a;-webkit-text-stroke:0.14px #2a2a2a">立面图1</div>
<div class="a" style="left:1.5px;top:108.8px;width:91.7px;height:341.5px;border:1px solid #9aa6bc;border-bottom:2px solid #9aa6bc;background:#fff"></div>
<div class="a" style="left:2.5px;top:110px;width:5px;height:234px;background:#f7f7f7"></div>
<div class="a" style="left:2.5px;top:110px;width:90px;height:8.5px;background:#efefef"></div>
<svg class="a" style="left:5px;top:112.20px" width="3" height="3" viewBox="0 0 3 3"><path d="M3 0v3h-3z" fill="#33337a"/></svg>
<div class="t" style="left:12.5px;top:111.65px;font-size:5.9px;color:#1a1a1a;font-weight:bold">视图信息</div>
<div class="a" style="left:7.5px;top:128.4px;width:85px;height:0.6px;background:#f0f0f0"></div>
<div class="t" style="left:8px;top:121.15px;font-size:6.1px;color:#2a2a2a;-webkit-text-stroke:0.14px #2a2a2a">楼层顶标高(m)</div>
<div class="t" style="left:52px;top:121.00px;font-size:6.4px;color:#8c8c8c;-webkit-text-stroke:0.1px #8c8c8c">2.950</div>
<div class="a" style="left:7.5px;top:139.65px;width:85px;height:0.6px;background:#f0f0f0"></div>
<div class="t" style="left:8px;top:132.35px;font-size:6.1px;color:#2a2a2a;-webkit-text-stroke:0.14px #2a2a2a">楼层底标高(m)</div>
<div class="t" style="left:52px;top:132.20px;font-size:6.4px;color:#8c8c8c;-webkit-text-stroke:0.1px #8c8c8c">-0.050</div>
<div class="a" style="left:7.5px;top:150.9px;width:85px;height:0.6px;background:#f0f0f0"></div>
<div class="t" style="left:8px;top:143.65px;font-size:6.1px;color:#2a2a2a;-webkit-text-stroke:0.14px #2a2a2a">楼层层高(m)</div>
<div class="t" style="left:52px;top:143.50px;font-size:6.4px;color:#8c8c8c;-webkit-text-stroke:0.1px #8c8c8c">3.0</div>
<div class="a" style="left:7.5px;top:162.15px;width:85px;height:0.6px;background:#f0f0f0"></div>
<div class="t" style="left:8px;top:154.85px;font-size:6.1px;color:#2a2a2a;-webkit-text-stroke:0.14px #2a2a2a">出图比例</div>
<div class="t" style="left:52px;top:154.70px;font-size:6.4px;color:#8c8c8c;-webkit-text-stroke:0.1px #8c8c8c">100</div>
<div class="a" style="left:7.5px;top:173.3px;width:85px;height:0.6px;background:#f0f0f0"></div>
<div class="t" style="left:8px;top:166.15px;font-size:6.1px;color:#2a2a2a;-webkit-text-stroke:0.14px #2a2a2a">绘图比例</div>
<div class="t" style="left:52px;top:166.00px;font-size:6.4px;color:#8c8c8c;-webkit-text-stroke:0.1px #8c8c8c">100</div>
<div class="a" style="left:7.5px;top:183.45px;width:85px;height:0.6px;background:#f0f0f0"></div>
<div class="t" style="left:8px;top:177.15px;font-size:6.1px;color:#2a2a2a;-webkit-text-stroke:0.14px #2a2a2a">楼板选中开/关</div>
<div class="a" style="left:52px;top:175.3px;width:8px;height:8px;border:0.8px solid #6a6a6a;border-radius:1.5px;background:#fff"></div>
<div class="a" style="left:7.5px;top:192.8px;width:85px;height:0.6px;background:#f0f0f0"></div>
<div class="t" style="left:8px;top:186.45px;font-size:6.1px;color:#2a2a2a;-webkit-text-stroke:0.14px #2a2a2a">显示定位基准点</div>
<svg class="a" style="left:52px;top:184.60px" width="8" height="8" viewBox="0 0 8 8"><rect x="0" y="0" width="8" height="8" rx="1.3" fill="#2e6fe0"/><path d="M1.8 4.2l1.6 1.6l3-3.6" stroke="#fff" stroke-width="1.1" fill="none"/></svg>
<div class="a" style="left:7.5px;top:202.2px;width:85px;height:0.6px;background:#f0f0f0"></div>
<div class="t" style="left:8px;top:195.85px;font-size:6.1px;color:#2a2a2a;-webkit-text-stroke:0.14px #2a2a2a">视口旋转(0.3...</div>
<div class="t" style="left:52px;top:195.70px;font-size:6.4px;color:#222;-webkit-text-stroke:0.1px #222">0</div>
<div class="a" style="left:7.5px;top:211.85000000000002px;width:85px;height:0.6px;background:#f0f0f0"></div>
<div class="t" style="left:8px;top:205.25px;font-size:6.1px;color:#2a2a2a;-webkit-text-stroke:0.14px #2a2a2a">视图类型</div>
<div class="t" style="left:52px;top:205.10px;font-size:6.4px;color:#8c8c8c;-webkit-text-stroke:0.1px #8c8c8c">绘图视图</div>
<div class="a" style="left:7.5px;top:221.45px;width:85px;height:0.6px;background:#f0f0f0"></div>
<div class="t" style="left:8px;top:215.15px;font-size:6.1px;color:#2a2a2a;-webkit-text-stroke:0.14px #2a2a2a">视图样板</div>
<div class="a" style="left:49px;top:212.4px;width:33.5px;height:9.6px;background:linear-gradient(#f2f2f2,#e4e4e4);border:0.8px solid #bcbcbc"></div>
<div class="t" style="left:51.5px;top:215.15px;font-size:6.1px;color:#222;-webkit-text-stroke:0.12px #222">(无)</div>
<svg class="a" style="left:77px;top:216px" width="5" height="3" viewBox="0 0 5 3"><path d="M.6 .6l1.9 1.8l1.9-1.8" stroke="#666" stroke-width=".8" fill="none"/></svg>
<div class="a" style="left:83.5px;top:212.4px;width:9px;height:9.6px;background:#e6e6e6;border:0.8px solid #9a9a9a"></div>
<div class="a" style="left:86px;top:217px;width:4px;height:0.8px;background:#333"></div>
<div class="a" style="left:2.5px;top:221.95px;width:90px;height:9.5px;background:#efefef"></div>
<svg class="a" style="left:5px;top:225.10px" width="3" height="3" viewBox="0 0 3 3"><path d="M3 0v3h-3z" fill="#33337a"/></svg>
<div class="t" style="left:12.5px;top:224.55px;font-size:5.9px;color:#1a1a1a;font-weight:bold">通用信息</div>
<div class="a" style="left:7.5px;top:240.9px;width:85px;height:0.6px;background:#f0f0f0"></div>
<div class="t" style="left:8px;top:234.15px;font-size:6.1px;color:#2a2a2a;-webkit-text-stroke:0.14px #2a2a2a">UniqueId</div>
<div class="t" style="left:52px;top:234.00px;font-size:6.4px;color:#8c8c8c;-webkit-text-stroke:0.1px #8c8c8c">66a7d9cc-6ae</div>
<div class="a" style="left:7.5px;top:251.1px;width:85px;height:0.6px;background:#f0f0f0"></div>
<div class="t" style="left:8px;top:244.35px;font-size:6.1px;color:#2a2a2a;-webkit-text-stroke:0.14px #2a2a2a">图纸类型</div>
<div class="t" style="left:52px;top:244.20px;font-size:6.4px;color:#8c8c8c;-webkit-text-stroke:0.1px #8c8c8c">通用视图</div>
<div class="a" style="left:7.5px;top:261.15px;width:85px;height:0.6px;background:#f0f0f0"></div>
<div class="t" style="left:8px;top:254.55px;font-size:6.1px;color:#2a2a2a;-webkit-text-stroke:0.14px #2a2a2a">视图名称</div>
<div class="t" style="left:52px;top:254.40px;font-size:6.4px;color:#8c8c8c;-webkit-text-stroke:0.1px #8c8c8c">立面图1</div>
<div class="a" style="left:2.5px;top:261.65px;width:90px;height:9.300000000000068px;background:#efefef"></div>
<svg class="a" style="left:5px;top:265.10px" width="3" height="3" viewBox="0 0 3 3"><path d="M3 0v3h-3z" fill="#33337a"/></svg>
<div class="t" style="left:12.5px;top:264.55px;font-size:5.9px;color:#1a1a1a;font-weight:bold">剖切参数</div>
<div class="a" style="left:7.5px;top:279.45000000000005px;width:85px;height:0.6px;background:#f0f0f0"></div>
<div class="t" style="left:8px;top:273.15px;font-size:6.1px;color:#2a2a2a;-webkit-text-stroke:0.14px #2a2a2a">启用剖切标高</div>
<div class="a" style="left:52px;top:271.3px;width:8px;height:8px;border:0.8px solid #6a6a6a;border-radius:1.5px;background:#fff"></div>
<div class="a" style="left:7.5px;top:288.75px;width:85px;height:0.6px;background:#f0f0f0"></div>
<div class="t" style="left:8px;top:282.45px;font-size:6.1px;color:#2a2a2a;-webkit-text-stroke:0.14px #2a2a2a">顶部剖切标高...</div>
<div class="t" style="left:52px;top:282.30px;font-size:6.4px;color:#222;-webkit-text-stroke:0.1px #222">0</div>
<div class="a" style="left:7.5px;top:298.15px;width:85px;height:0.6px;background:#f0f0f0"></div>
<div class="t" style="left:8px;top:291.75px;font-size:6.1px;color:#2a2a2a;-webkit-text-stroke:0.14px #2a2a2a">底部剖切标高...</div>
<div class="t" style="left:52px;top:291.60px;font-size:6.4px;color:#222;-webkit-text-stroke:0.1px #222">0</div>
<div class="a" style="left:2.5px;top:298.65px;width:90px;height:9.050000000000011px;background:#efefef"></div>
<svg class="a" style="left:5px;top:301.90px" width="3" height="3" viewBox="0 0 3 3"><path d="M3 0v3h-3z" fill="#33337a"/></svg>
<div class="t" style="left:12.5px;top:301.35px;font-size:5.9px;color:#1a1a1a;font-weight:bold">视图功能</div>
<div class="a" style="left:7.5px;top:316.4px;width:85px;height:0.6px;background:#f0f0f0"></div>
<div class="t" style="left:8px;top:309.85px;font-size:6.1px;color:#2a2a2a;-webkit-text-stroke:0.14px #2a2a2a">本层三维</div>
<div class="a" style="left:49px;top:307.6px;width:43.5px;height:9px;background:linear-gradient(#e8e8e8,#d8d8d8);border:0.7px solid #9a9a9a"></div>
<div class="t" style="left:59.5px;top:309.95px;font-size:6.1px;color:#222;-webkit-text-stroke:0.12px #222">本层三维</div>
<div class="a" style="left:7.5px;top:325.9px;width:85px;height:0.6px;background:#f0f0f0"></div>
<div class="t" style="left:8px;top:319.65px;font-size:6.1px;color:#2a2a2a;-webkit-text-stroke:0.14px #2a2a2a">自动刷新剖面</div>
<svg class="a" style="left:52px;top:317.80px" width="8" height="8" viewBox="0 0 8 8"><rect x="0" y="0" width="8" height="8" rx="1.3" fill="#2e6fe0"/><path d="M1.8 4.2l1.6 1.6l3-3.6" stroke="#fff" stroke-width="1.1" fill="none"/></svg>
<div class="a" style="left:2.5px;top:326.4px;width:90px;height:8.800000000000011px;background:#efefef"></div>
<svg class="a" style="left:5px;top:329.50px" width="3" height="3" viewBox="0 0 3 3"><path d="M3 0v3h-3z" fill="#33337a"/></svg>
<div class="t" style="left:12.5px;top:328.95px;font-size:5.9px;color:#1a1a1a;font-weight:bold">杂项</div>
<div class="a" style="left:7.5px;top:343.5px;width:85px;height:0.6px;background:#f0f0f0"></div>
<div class="t" style="left:8px;top:337.25px;font-size:6.1px;color:#2a2a2a;-webkit-text-stroke:0.14px #2a2a2a">IfExternalPro...</div>
<div class="a" style="left:52px;top:335.4px;width:8px;height:8px;border:0.8px solid #ccc;border-radius:1.3px;background:#eaeaea"></div>
<div class="a" style="left:1.5px;top:108.8px;width:91.7px;height:341.5px;border:1px solid #9aa6bc;border-bottom:2px solid #9aa6bc"></div>
<div class="a" style="left:49px;top:117px;width:0.6px;height:227px;background:#f0f0f0"></div>
<div class="t" style="left:97.8px;top:74.05px;font-size:6.1px;color:#222;-webkit-text-stroke:0.12px #222">0.000(m)<span style="font-size:5.8px">一层平面</span></div>
<div class="a" style="left:154.7px;top:71px;width:31.4px;height:11px;background:#8fa6ef"></div>
<div class="t" style="left:156.7px;top:74.30px;font-size:5.6px;color:#111;-webkit-text-stroke:0.12px #111">立面图<span style="font-size:6.3px">1</span></div>
<svg class="a" style="left:178.5px;top:74px" width="5" height="5" viewBox="0 0 5 5"><path d="M.6 .6l3.8 3.8M4.4 .6l-3.8 3.8" stroke="#222" stroke-width=".8"/></svg>
<div class="a" style="left:787px;top:82px;width:15.5px;height:357px;background:#fff;border-right:1px solid #d8d8d8"></div>
<svg class="a" style="left:794px;top:74px" width="6" height="4" viewBox="0 0 6 4"><path d="M0.5 0.3h5M0.5 1.5h5l-2.5 2.3z" fill="#333" stroke="#333" stroke-width=".5"/></svg>
<svg class="a" style="left:788px;top:84px" width="13" height="12" viewBox="0 0 13 12"><circle cx="3.5" cy="3" r="1.6" fill="#222"/><path d="M1 6.5h5" stroke="#222" stroke-width="1.2"/><circle cx="9" cy="8.5" r="1.6" fill="#222"/><path d="M6.5 11.5h5" stroke="#222" stroke-width="1.2"/><path d="M8 1.5h3v3M5 10.5h-3v-3" stroke="#222" stroke-width=".9" fill="none"/></svg>
<svg class="a" style="left:788.5px;top:101px" width="12" height="12.5" viewBox="0 0 12 12.5"><rect x=".5" y=".5" width="11" height="11.5" fill="#f8f8f8" stroke="#777" stroke-width=".9"/><path d="M7 .5v11.5M7 4h4.5M7 7.5h4.5" stroke="#888" stroke-width=".8"/></svg>
<svg class="a" style="left:788.5px;top:116.5px" width="12" height="13" viewBox="0 0 12 13"><path d="M1 1h5.5v2.5h-2.5v4.5h-3z" fill="#fff" stroke="#888" stroke-width=".9"/><path d="M4 3.5h7v8.5h-7z" fill="#fff" stroke="#f08a1c" stroke-width="1.3"/><path d="M4 3.5h2.5v4.5h-2.5z" fill="#fff" stroke="#888" stroke-width=".8"/></svg>
<svg class="a" style="left:788.5px;top:133px" width="12" height="12" viewBox="0 0 12 12"><rect x=".5" y=".5" width="11" height="11" fill="#fff" stroke="#555" stroke-width=".8"/><path d="M.5 4l3.5-3.5M.5 8l7.5-7.5M.5 11.5l11-11M4 11.5l7.5-7.5M8 11.5l3.5-3.5" stroke="#3a3a3a" stroke-width="1.3"/></svg>
<div class="a" style="left:788px;top:146.8px;width:13px;height:12px;background:#dde6f4;border:0.8px solid #9ab0d0"></div>
<svg class="a" style="left:789.5px;top:149px" width="10" height="8" viewBox="0 0 10 8"><path d="M1 2.5h7M6 .8l2 1.7l-2 1.7M9 5.5h-7M4 3.8l-2 1.7l2 1.7" stroke="#2a7ad8" stroke-width="1" fill="none"/></svg>
<div class="a" style="left:787px;top:426px;width:15.5px;height:0.8px;background:#c8c8c8"></div>
<svg class="a" style="left:789px;top:427.5px" width="13" height="12" viewBox="0 0 13 12"><circle cx="5" cy="3.5" r="2.5" fill="none" stroke="#444" stroke-width=".8"/><path d="M1 11q1-4 4-5" stroke="#444" stroke-width=".8" fill="none"/><path d="M8.5 6l2.5 1.4v2.8l-2.5 1.4l-2.5-1.4v-2.8z" fill="#fff" stroke="#555" stroke-width=".7"/><circle cx="8.5" cy="8.8" r=".8" fill="#888"/></svg>
<div class="t" style="left:808px;top:74.25px;font-size:6.3px;color:#222;-webkit-text-stroke:0.12px #222">项目浏览器 - 立面模型...</div>
<svg class="a" style="left:874px;top:73px" width="26" height="7" viewBox="0 0 26 7"><path d="M0.5 2h4l-2 2.5z" fill="#222"/><path d="M10.5 1v3.5M9 4.5h3M11 4.5v2" stroke="#333" stroke-width=".9"/><path d="M17 1l4.5 4.5M21.5 1l-4.5 4.5" stroke="#222" stroke-width="1"/></svg>
<div class="a" style="left:806.2px;top:82px;width:93.8px;height:369px;border:1px solid #d0d0d0;background:#fff"></div>
<div class="a" style="left:890.5px;top:82.5px;width:7px;height:360px;background:#fff"></div>
<div class="a" style="left:890.4px;top:158.8px;width:6.8px;height:274px;background:#fff;border:0.8px solid #c8c4c0"></div>
<div class="a" style="left:890.8px;top:82.8px;width:6.5px;height:7px;background:#fff;border:0.8px solid #aaa"></div>
<svg class="a" style="left:892.3px;top:84.8px" width="4" height="3" viewBox="0 0 4 3"><path d="M0 2.5h3.5l-1.75-2z" fill="#222"/></svg>
<div class="a" style="left:890.6px;top:433.5px;width:6.6px;height:7.5px;background:#fff;border:0.8px solid #c8c4c0"></div>
<svg class="a" style="left:892.3px;top:436.2px" width="4" height="3" viewBox="0 0 4 3"><path d="M0 .3h3.5l-1.75 2z" fill="#222"/></svg>
<div class="a" style="left:806.8px;top:441.8px;width:84px;height:6.6px;background:#fff"></div>
<div class="a" style="left:807px;top:442px;width:6.5px;height:6.4px;background:#fff;border:0.8px solid #aaa"></div>
<svg class="a" style="left:809px;top:443.3px" width="3" height="4" viewBox="0 0 3 4"><path d="M2.5 0v3.6l-2-1.8z" fill="#222"/></svg>
<div class="a" style="left:813.8px;top:442px;width:57.5px;height:6.4px;background:#fff;border:0.8px solid #bbb"></div>
<div class="a" style="left:881px;top:442px;width:9px;height:6.4px;background:#fff;border:0.8px solid #aaa"></div>
<svg class="a" style="left:884.5px;top:443.3px" width="3" height="4" viewBox="0 0 3 4"><path d="M.5 0v3.6l2-1.8z" fill="#222"/></svg>
<div class="a" style="left:890.5px;top:441.8px;width:7px;height:7px;background:#e8e8e8"></div>
<svg class="a" style="left:812px;top:82px" width="2" height="355.17999999999995" viewBox="0 0 2 355.17999999999995"><path d="M1 0V355.17999999999995" stroke="#a0a0a0" stroke-width=".7" stroke-dasharray="1 1"/></svg>
<svg class="a" style="left:822.5px;top:85.4px" width="4.5" height="2" viewBox="0 0 4.5 2"><path d="M0 1H4.5" stroke="#a0a0a0" stroke-width=".7" stroke-dasharray="1 1"/></svg>
<svg class="a" style="left:826.5px;top:82.60000000000001px" width="7" height="7.5" viewBox="0 0 7 7.5"><path d="M2 3.3v-1.2a1.5 1.5 0 0 1 3 0" stroke="#2f9ae8" stroke-width=".7" fill="none"/><rect x="1" y="3.3" width="5.2" height="3.6" rx=".7" fill="#fff" stroke="#2f9ae8" stroke-width=".75"/><rect x="3.3" y="4.5" width=".7" height="1.4" fill="#2f9ae8"/></svg>
<div class="t" style="left:835px;top:83.70px;font-size:5.8px;color:#2f9ae8;">非标</div>
<div class="t" style="left:848px;top:83.40px;font-size:6.3px;color:#333;width:41px;overflow:hidden;-webkit-text-stroke:0.05px #333">67.400(m)十七层</div>
<svg class="a" style="left:822.5px;top:94.42px" width="4.5" height="2" viewBox="0 0 4.5 2"><path d="M0 1H4.5" stroke="#a0a0a0" stroke-width=".7" stroke-dasharray="1 1"/></svg>
<svg class="a" style="left:826.5px;top:91.62px" width="7" height="7.5" viewBox="0 0 7 7.5"><path d="M2 3.3v-1.2a1.5 1.5 0 0 1 3 0" stroke="#2f9ae8" stroke-width=".7" fill="none"/><rect x="1" y="3.3" width="5.2" height="3.6" rx=".7" fill="#fff" stroke="#2f9ae8" stroke-width=".75"/><rect x="3.3" y="4.5" width=".7" height="1.4" fill="#2f9ae8"/></svg>
<div class="t" style="left:835px;top:92.72px;font-size:5.8px;color:#2f9ae8;">非标</div>
<div class="t" style="left:848px;top:92.42px;font-size:6.3px;color:#333;width:41px;overflow:hidden;-webkit-text-stroke:0.05px #333">63.500(m)十六层</div>
<svg class="a" style="left:822.5px;top:103.44px" width="4.5" height="2" viewBox="0 0 4.5 2"><path d="M0 1H4.5" stroke="#a0a0a0" stroke-width=".7" stroke-dasharray="1 1"/></svg>
<svg class="a" style="left:826.5px;top:100.64px" width="7" height="7.5" viewBox="0 0 7 7.5"><path d="M2 3.3v-1.2a1.5 1.5 0 0 1 3 0" stroke="#2f9ae8" stroke-width=".7" fill="none"/><rect x="1" y="3.3" width="5.2" height="3.6" rx=".7" fill="#fff" stroke="#2f9ae8" stroke-width=".75"/><rect x="3.3" y="4.5" width=".7" height="1.4" fill="#2f9ae8"/></svg>
<div class="t" style="left:835px;top:101.74px;font-size:5.8px;color:#2f9ae8;">非标</div>
<div class="t" style="left:848px;top:101.44px;font-size:6.3px;color:#333;width:41px;overflow:hidden;-webkit-text-stroke:0.05px #333">59.600(m)十五层</div>
<svg class="a" style="left:822.5px;top:112.46000000000001px" width="4.5" height="2" viewBox="0 0 4.5 2"><path d="M0 1H4.5" stroke="#a0a0a0" stroke-width=".7" stroke-dasharray="1 1"/></svg>
<svg class="a" style="left:826.5px;top:109.66000000000001px" width="7" height="7.5" viewBox="0 0 7 7.5"><path d="M2 3.3v-1.2a1.5 1.5 0 0 1 3 0" stroke="#2f9ae8" stroke-width=".7" fill="none"/><rect x="1" y="3.3" width="5.2" height="3.6" rx=".7" fill="#fff" stroke="#2f9ae8" stroke-width=".75"/><rect x="3.3" y="4.5" width=".7" height="1.4" fill="#2f9ae8"/></svg>
<div class="t" style="left:835px;top:110.76px;font-size:5.8px;color:#2f9ae8;">非标</div>
<div class="t" style="left:848px;top:110.46px;font-size:6.3px;color:#333;width:41px;overflow:hidden;-webkit-text-stroke:0.05px #333">55.700(m)十四层</div>
<svg class="a" style="left:822.5px;top:121.48px" width="4.5" height="2" viewBox="0 0 4.5 2"><path d="M0 1H4.5" stroke="#a0a0a0" stroke-width=".7" stroke-dasharray="1 1"/></svg>
<svg class="a" style="left:826.5px;top:118.68px" width="7" height="7.5" viewBox="0 0 7 7.5"><path d="M2 3.3v-1.2a1.5 1.5 0 0 1 3 0" stroke="#2f9ae8" stroke-width=".7" fill="none"/><rect x="1" y="3.3" width="5.2" height="3.6" rx=".7" fill="#fff" stroke="#2f9ae8" stroke-width=".75"/><rect x="3.3" y="4.5" width=".7" height="1.4" fill="#2f9ae8"/></svg>
<div class="t" style="left:835px;top:119.78px;font-size:5.8px;color:#2f9ae8;">非标</div>
<div class="t" style="left:848px;top:119.48px;font-size:6.3px;color:#333;width:41px;overflow:hidden;-webkit-text-stroke:0.05px #333">51.800(m)十三层</div>
<svg class="a" style="left:822.5px;top:130.5px" width="4.5" height="2" viewBox="0 0 4.5 2"><path d="M0 1H4.5" stroke="#a0a0a0" stroke-width=".7" stroke-dasharray="1 1"/></svg>
<svg class="a" style="left:826.5px;top:127.7px" width="7" height="7.5" viewBox="0 0 7 7.5"><path d="M2 3.3v-1.2a1.5 1.5 0 0 1 3 0" stroke="#2f9ae8" stroke-width=".7" fill="none"/><rect x="1" y="3.3" width="5.2" height="3.6" rx=".7" fill="#fff" stroke="#2f9ae8" stroke-width=".75"/><rect x="3.3" y="4.5" width=".7" height="1.4" fill="#2f9ae8"/></svg>
<div class="t" style="left:835px;top:128.80px;font-size:5.8px;color:#2f9ae8;">非标</div>
<div class="t" style="left:848px;top:128.50px;font-size:6.3px;color:#333;width:41px;overflow:hidden;-webkit-text-stroke:0.05px #333">47.900(m)十二层</div>
<svg class="a" style="left:822.5px;top:139.52px" width="4.5" height="2" viewBox="0 0 4.5 2"><path d="M0 1H4.5" stroke="#a0a0a0" stroke-width=".7" stroke-dasharray="1 1"/></svg>
<svg class="a" style="left:826.5px;top:136.72px" width="7" height="7.5" viewBox="0 0 7 7.5"><path d="M2 3.3v-1.2a1.5 1.5 0 0 1 3 0" stroke="#2f9ae8" stroke-width=".7" fill="none"/><rect x="1" y="3.3" width="5.2" height="3.6" rx=".7" fill="#fff" stroke="#2f9ae8" stroke-width=".75"/><rect x="3.3" y="4.5" width=".7" height="1.4" fill="#2f9ae8"/></svg>
<div class="t" style="left:835px;top:137.82px;font-size:5.8px;color:#2f9ae8;">非标</div>
<div class="t" style="left:848px;top:137.52px;font-size:6.3px;color:#333;width:41px;overflow:hidden;-webkit-text-stroke:0.05px #333">44.000(m)十一层</div>
<svg class="a" style="left:822.5px;top:148.54000000000002px" width="4.5" height="2" viewBox="0 0 4.5 2"><path d="M0 1H4.5" stroke="#a0a0a0" stroke-width=".7" stroke-dasharray="1 1"/></svg>
<svg class="a" style="left:826.5px;top:145.74px" width="7" height="7.5" viewBox="0 0 7 7.5"><path d="M2 3.3v-1.2a1.5 1.5 0 0 1 3 0" stroke="#2f9ae8" stroke-width=".7" fill="none"/><rect x="1" y="3.3" width="5.2" height="3.6" rx=".7" fill="#fff" stroke="#2f9ae8" stroke-width=".75"/><rect x="3.3" y="4.5" width=".7" height="1.4" fill="#2f9ae8"/></svg>
<div class="t" style="left:835px;top:146.84px;font-size:5.8px;color:#2f9ae8;">非标</div>
<div class="t" style="left:848px;top:146.54px;font-size:6.3px;color:#333;width:41px;overflow:hidden;-webkit-text-stroke:0.05px #333">39.700(m)十层平</div>
<svg class="a" style="left:822.5px;top:157.56px" width="4.5" height="2" viewBox="0 0 4.5 2"><path d="M0 1H4.5" stroke="#a0a0a0" stroke-width=".7" stroke-dasharray="1 1"/></svg>
<svg class="a" style="left:826.5px;top:154.76px" width="7" height="7.5" viewBox="0 0 7 7.5"><path d="M2 3.3v-1.2a1.5 1.5 0 0 1 3 0" stroke="#2f9ae8" stroke-width=".7" fill="none"/><rect x="1" y="3.3" width="5.2" height="3.6" rx=".7" fill="#fff" stroke="#2f9ae8" stroke-width=".75"/><rect x="3.3" y="4.5" width=".7" height="1.4" fill="#2f9ae8"/></svg>
<div class="t" style="left:835px;top:155.86px;font-size:5.8px;color:#2f9ae8;">非标</div>
<div class="t" style="left:848px;top:155.56px;font-size:6.3px;color:#333;width:41px;overflow:hidden;-webkit-text-stroke:0.05px #333">35.000(m)九层平</div>
<svg class="a" style="left:822.5px;top:166.57999999999998px" width="4.5" height="2" viewBox="0 0 4.5 2"><path d="M0 1H4.5" stroke="#a0a0a0" stroke-width=".7" stroke-dasharray="1 1"/></svg>
<svg class="a" style="left:826.5px;top:163.77999999999997px" width="7" height="7.5" viewBox="0 0 7 7.5"><path d="M2 3.3v-1.2a1.5 1.5 0 0 1 3 0" stroke="#2f9ae8" stroke-width=".7" fill="none"/><rect x="1" y="3.3" width="5.2" height="3.6" rx=".7" fill="#fff" stroke="#2f9ae8" stroke-width=".75"/><rect x="3.3" y="4.5" width=".7" height="1.4" fill="#2f9ae8"/></svg>
<div class="t" style="left:835px;top:164.88px;font-size:5.8px;color:#2f9ae8;">非标</div>
<div class="t" style="left:848px;top:164.58px;font-size:6.3px;color:#333;width:41px;overflow:hidden;-webkit-text-stroke:0.05px #333">30.700(m)八层平</div>
<svg class="a" style="left:822.5px;top:175.6px" width="4.5" height="2" viewBox="0 0 4.5 2"><path d="M0 1H4.5" stroke="#a0a0a0" stroke-width=".7" stroke-dasharray="1 1"/></svg>
<svg class="a" style="left:826.5px;top:172.79999999999998px" width="7" height="7.5" viewBox="0 0 7 7.5"><path d="M2 3.3v-1.2a1.5 1.5 0 0 1 3 0" stroke="#2f9ae8" stroke-width=".7" fill="none"/><rect x="1" y="3.3" width="5.2" height="3.6" rx=".7" fill="#fff" stroke="#2f9ae8" stroke-width=".75"/><rect x="3.3" y="4.5" width=".7" height="1.4" fill="#2f9ae8"/></svg>
<div class="t" style="left:835px;top:173.90px;font-size:5.8px;color:#2f9ae8;">非标</div>
<div class="t" style="left:848px;top:173.60px;font-size:6.3px;color:#333;width:41px;overflow:hidden;-webkit-text-stroke:0.05px #333">26.400(m)七层平</div>
<svg class="a" style="left:822.5px;top:184.62px" width="4.5" height="2" viewBox="0 0 4.5 2"><path d="M0 1H4.5" stroke="#a0a0a0" stroke-width=".7" stroke-dasharray="1 1"/></svg>
<svg class="a" style="left:826.5px;top:181.82px" width="7" height="7.5" viewBox="0 0 7 7.5"><path d="M2 3.3v-1.2a1.5 1.5 0 0 1 3 0" stroke="#2f9ae8" stroke-width=".7" fill="none"/><rect x="1" y="3.3" width="5.2" height="3.6" rx=".7" fill="#fff" stroke="#2f9ae8" stroke-width=".75"/><rect x="3.3" y="4.5" width=".7" height="1.4" fill="#2f9ae8"/></svg>
<div class="t" style="left:835px;top:182.92px;font-size:5.8px;color:#2f9ae8;">非标</div>
<div class="t" style="left:848px;top:182.62px;font-size:6.3px;color:#333;width:41px;overflow:hidden;-webkit-text-stroke:0.05px #333">21.900(m)六层平</div>
<svg class="a" style="left:822.5px;top:193.64px" width="4.5" height="2" viewBox="0 0 4.5 2"><path d="M0 1H4.5" stroke="#a0a0a0" stroke-width=".7" stroke-dasharray="1 1"/></svg>
<svg class="a" style="left:826.5px;top:190.83999999999997px" width="7" height="7.5" viewBox="0 0 7 7.5"><path d="M2 3.3v-1.2a1.5 1.5 0 0 1 3 0" stroke="#2f9ae8" stroke-width=".7" fill="none"/><rect x="1" y="3.3" width="5.2" height="3.6" rx=".7" fill="#fff" stroke="#2f9ae8" stroke-width=".75"/><rect x="3.3" y="4.5" width=".7" height="1.4" fill="#2f9ae8"/></svg>
<div class="t" style="left:835px;top:191.94px;font-size:5.8px;color:#2f9ae8;">非标</div>
<div class="t" style="left:848px;top:191.64px;font-size:6.3px;color:#333;width:41px;overflow:hidden;-webkit-text-stroke:0.05px #333">17.600(m)五层平</div>
<svg class="a" style="left:822.5px;top:202.66px" width="4.5" height="2" viewBox="0 0 4.5 2"><path d="M0 1H4.5" stroke="#a0a0a0" stroke-width=".7" stroke-dasharray="1 1"/></svg>
<svg class="a" style="left:826.5px;top:199.85999999999999px" width="7" height="7.5" viewBox="0 0 7 7.5"><path d="M2 3.3v-1.2a1.5 1.5 0 0 1 3 0" stroke="#2f9ae8" stroke-width=".7" fill="none"/><rect x="1" y="3.3" width="5.2" height="3.6" rx=".7" fill="#fff" stroke="#2f9ae8" stroke-width=".75"/><rect x="3.3" y="4.5" width=".7" height="1.4" fill="#2f9ae8"/></svg>
<div class="t" style="left:835px;top:200.96px;font-size:5.8px;color:#2f9ae8;">非标</div>
<div class="t" style="left:848px;top:200.66px;font-size:6.3px;color:#333;width:41px;overflow:hidden;-webkit-text-stroke:0.05px #333">13.300(m)四层平</div>
<svg class="a" style="left:822.5px;top:211.68px" width="4.5" height="2" viewBox="0 0 4.5 2"><path d="M0 1H4.5" stroke="#a0a0a0" stroke-width=".7" stroke-dasharray="1 1"/></svg>
<svg class="a" style="left:826.5px;top:208.88px" width="7" height="7.5" viewBox="0 0 7 7.5"><path d="M2 3.3v-1.2a1.5 1.5 0 0 1 3 0" stroke="#2f9ae8" stroke-width=".7" fill="none"/><rect x="1" y="3.3" width="5.2" height="3.6" rx=".7" fill="#fff" stroke="#2f9ae8" stroke-width=".75"/><rect x="3.3" y="4.5" width=".7" height="1.4" fill="#2f9ae8"/></svg>
<div class="t" style="left:835px;top:209.98px;font-size:5.8px;color:#2f9ae8;">非标</div>
<div class="t" style="left:848px;top:209.68px;font-size:6.3px;color:#333;width:41px;overflow:hidden;-webkit-text-stroke:0.05px #333">9.000(m)三层平面</div>
<svg class="a" style="left:822.5px;top:220.7px" width="4.5" height="2" viewBox="0 0 4.5 2"><path d="M0 1H4.5" stroke="#a0a0a0" stroke-width=".7" stroke-dasharray="1 1"/></svg>
<svg class="a" style="left:826.5px;top:217.89999999999998px" width="7" height="7.5" viewBox="0 0 7 7.5"><path d="M2 3.3v-1.2a1.5 1.5 0 0 1 3 0" stroke="#2f9ae8" stroke-width=".7" fill="none"/><rect x="1" y="3.3" width="5.2" height="3.6" rx=".7" fill="#fff" stroke="#2f9ae8" stroke-width=".75"/><rect x="3.3" y="4.5" width=".7" height="1.4" fill="#2f9ae8"/></svg>
<div class="t" style="left:835px;top:219.00px;font-size:5.8px;color:#2f9ae8;">非标</div>
<div class="t" style="left:848px;top:218.70px;font-size:6.3px;color:#333;width:41px;overflow:hidden;-webkit-text-stroke:0.05px #333">4.700(m)二层平面</div>
<svg class="a" style="left:822.5px;top:229.72px" width="4.5" height="2" viewBox="0 0 4.5 2"><path d="M0 1H4.5" stroke="#a0a0a0" stroke-width=".7" stroke-dasharray="1 1"/></svg>
<svg class="a" style="left:826.5px;top:226.92px" width="7" height="7.5" viewBox="0 0 7 7.5"><path d="M2 3.3v-1.2a1.5 1.5 0 0 1 3 0" stroke="#2f9ae8" stroke-width=".7" fill="none"/><rect x="1" y="3.3" width="5.2" height="3.6" rx=".7" fill="#fff" stroke="#2f9ae8" stroke-width=".75"/><rect x="3.3" y="4.5" width=".7" height="1.4" fill="#2f9ae8"/></svg>
<div class="t" style="left:835px;top:228.02px;font-size:5.8px;color:#2f9ae8;">非标</div>
<div class="t" style="left:848px;top:227.72px;font-size:6.3px;color:#333;width:41px;overflow:hidden;-webkit-text-stroke:0.05px #333">0.000(m)一层平面</div>
<svg class="a" style="left:822.5px;top:238.74px" width="4.5" height="2" viewBox="0 0 4.5 2"><path d="M0 1H4.5" stroke="#a0a0a0" stroke-width=".7" stroke-dasharray="1 1"/></svg>
<svg class="a" style="left:826.5px;top:235.94px" width="7" height="7.5" viewBox="0 0 7 7.5"><path d="M2 3.3v-1.2a1.5 1.5 0 0 1 3 0" stroke="#2f9ae8" stroke-width=".7" fill="none"/><rect x="1" y="3.3" width="5.2" height="3.6" rx=".7" fill="#fff" stroke="#2f9ae8" stroke-width=".75"/><rect x="3.3" y="4.5" width=".7" height="1.4" fill="#2f9ae8"/></svg>
<div class="t" style="left:835px;top:237.04px;font-size:5.8px;color:#2f9ae8;">非标</div>
<div class="t" style="left:848px;top:236.74px;font-size:6.3px;color:#333;width:41px;overflow:hidden;-webkit-text-stroke:0.05px #333">-5.900(m)平面</div>
<svg class="a" style="left:822.5px;top:247.76px" width="4.5" height="2" viewBox="0 0 4.5 2"><path d="M0 1H4.5" stroke="#a0a0a0" stroke-width=".7" stroke-dasharray="1 1"/></svg>
<svg class="a" style="left:826.5px;top:244.95999999999998px" width="7" height="7.5" viewBox="0 0 7 7.5"><path d="M2 3.3v-1.2a1.5 1.5 0 0 1 3 0" stroke="#2f9ae8" stroke-width=".7" fill="none"/><rect x="1" y="3.3" width="5.2" height="3.6" rx=".7" fill="#fff" stroke="#2f9ae8" stroke-width=".75"/><rect x="3.3" y="4.5" width=".7" height="1.4" fill="#2f9ae8"/></svg>
<div class="t" style="left:835px;top:246.06px;font-size:5.8px;color:#2f9ae8;">非标</div>
<div class="t" style="left:848px;top:245.76px;font-size:6.3px;color:#333;width:41px;overflow:hidden;-webkit-text-stroke:0.05px #333">-9.950(m)平面</div>
<svg class="a" style="left:821.5px;top:82px" width="2" height="166.76" viewBox="0 0 2 166.76"><path d="M1 0V166.76" stroke="#a0a0a0" stroke-width=".7" stroke-dasharray="1 1"/></svg>
<div class="a" style="left:810.5px;top:255.17999999999998px;width:5.2px;height:5.2px;background:#fff;border:0.6px solid #9a9a9a"></div>
<div class="a" style="left:811.7px;top:257.47999999999996px;width:2.8px;height:0.6px;background:#333"></div>
<div class="t" style="left:817px;top:254.93px;font-size:6.1px;color:#222;-webkit-text-stroke:0.2px #222">剖面视图</div>
<svg class="a" style="left:821.5px;top:260.78px" width="2" height="60.139999999999986" viewBox="0 0 2 60.139999999999986"><path d="M1 0V60.139999999999986" stroke="#a0a0a0" stroke-width=".7" stroke-dasharray="1 1"/></svg>
<svg class="a" style="left:823px;top:265.79999999999995px" width="3" height="2" viewBox="0 0 3 2"><path d="M0 1H3" stroke="#a0a0a0" stroke-width=".7" stroke-dasharray="1 1"/></svg>
<div class="t" style="left:826.5px;top:263.95px;font-size:6.1px;color:#333;-webkit-text-stroke:0.1px #333">1-1剖面</div>
<svg class="a" style="left:823px;top:274.82px" width="3" height="2" viewBox="0 0 3 2"><path d="M0 1H3" stroke="#a0a0a0" stroke-width=".7" stroke-dasharray="1 1"/></svg>
<div class="t" style="left:826.5px;top:272.97px;font-size:6.1px;color:#333;-webkit-text-stroke:0.1px #333">3-3剖面</div>
<svg class="a" style="left:823px;top:283.84000000000003px" width="3" height="2" viewBox="0 0 3 2"><path d="M0 1H3" stroke="#a0a0a0" stroke-width=".7" stroke-dasharray="1 1"/></svg>
<div class="t" style="left:826.5px;top:281.99px;font-size:6.1px;color:#333;-webkit-text-stroke:0.1px #333">4-4剖面</div>
<svg class="a" style="left:823px;top:292.86px" width="3" height="2" viewBox="0 0 3 2"><path d="M0 1H3" stroke="#a0a0a0" stroke-width=".7" stroke-dasharray="1 1"/></svg>
<div class="t" style="left:826.5px;top:291.01px;font-size:6.1px;color:#333;-webkit-text-stroke:0.1px #333">5-5剖面</div>
<svg class="a" style="left:823px;top:301.88px" width="3" height="2" viewBox="0 0 3 2"><path d="M0 1H3" stroke="#a0a0a0" stroke-width=".7" stroke-dasharray="1 1"/></svg>
<div class="t" style="left:826.5px;top:300.03px;font-size:6.1px;color:#333;-webkit-text-stroke:0.1px #333">6-6剖面</div>
<svg class="a" style="left:823px;top:310.9px" width="3" height="2" viewBox="0 0 3 2"><path d="M0 1H3" stroke="#a0a0a0" stroke-width=".7" stroke-dasharray="1 1"/></svg>
<div class="t" style="left:826.5px;top:309.05px;font-size:6.1px;color:#333;-webkit-text-stroke:0.1px #333">7-7剖面</div>
<svg class="a" style="left:823px;top:319.91999999999996px" width="3" height="2" viewBox="0 0 3 2"><path d="M0 1H3" stroke="#a0a0a0" stroke-width=".7" stroke-dasharray="1 1"/></svg>
<div class="t" style="left:826.5px;top:318.07px;font-size:6.1px;color:#333;-webkit-text-stroke:0.1px #333">8-8剖面</div>
<svg class="a" style="left:813px;top:328.94px" width="3" height="2" viewBox="0 0 3 2"><path d="M0 1H3" stroke="#a0a0a0" stroke-width=".7" stroke-dasharray="1 1"/></svg>
<div class="t" style="left:817px;top:327.09px;font-size:6.1px;color:#222;-webkit-text-stroke:0.2px #222">立面视图</div>
<svg class="a" style="left:813px;top:337.96000000000004px" width="3" height="2" viewBox="0 0 3 2"><path d="M0 1H3" stroke="#a0a0a0" stroke-width=".7" stroke-dasharray="1 1"/></svg>
<div class="t" style="left:817px;top:336.11px;font-size:6.1px;color:#222;-webkit-text-stroke:0.2px #222">面积平面</div>
<svg class="a" style="left:813px;top:346.98px" width="3" height="2" viewBox="0 0 3 2"><path d="M0 1H3" stroke="#a0a0a0" stroke-width=".7" stroke-dasharray="1 1"/></svg>
<div class="t" style="left:817px;top:345.13px;font-size:6.1px;color:#222;-webkit-text-stroke:0.2px #222">渲染视图</div>
<svg class="a" style="left:813px;top:356.0px" width="3" height="2" viewBox="0 0 3 2"><path d="M0 1H3" stroke="#a0a0a0" stroke-width=".7" stroke-dasharray="1 1"/></svg>
<div class="t" style="left:817px;top:354.15px;font-size:6.1px;color:#222;-webkit-text-stroke:0.2px #222">图纸-目录</div>
<svg class="a" style="left:813px;top:365.02px" width="3" height="2" viewBox="0 0 3 2"><path d="M0 1H3" stroke="#a0a0a0" stroke-width=".7" stroke-dasharray="1 1"/></svg>
<div class="t" style="left:817px;top:363.17px;font-size:6.1px;color:#222;-webkit-text-stroke:0.2px #222">图纸-设计说明</div>
<svg class="a" style="left:813px;top:374.03999999999996px" width="3" height="2" viewBox="0 0 3 2"><path d="M0 1H3" stroke="#a0a0a0" stroke-width=".7" stroke-dasharray="1 1"/></svg>
<div class="t" style="left:817px;top:372.19px;font-size:6.1px;color:#222;-webkit-text-stroke:0.2px #222">图纸-平面图</div>
<div class="a" style="left:810.5px;top:381.4599999999999px;width:5.2px;height:5.2px;background:#fff;border:0.6px solid #9a9a9a"></div>
<div class="a" style="left:811.7px;top:383.75999999999993px;width:2.8px;height:0.6px;background:#333"></div>
<div class="a" style="left:812.8px;top:382.65999999999997px;width:0.6px;height:2.8px;background:#333"></div>
<div class="a" style="left:816.8px;top:380.05999999999995px;width:30.5px;height:8px;background:#3c7fd6"></div>
<div class="t" style="left:817px;top:381.21px;font-size:6.1px;color:#fff;-webkit-text-stroke:0.12px #fff">图纸-立面图</div>
<svg class="a" style="left:813px;top:392.08000000000004px" width="3" height="2" viewBox="0 0 3 2"><path d="M0 1H3" stroke="#a0a0a0" stroke-width=".7" stroke-dasharray="1 1"/></svg>
<div class="t" style="left:817px;top:390.23px;font-size:6.1px;color:#222;-webkit-text-stroke:0.2px #222">图纸-剖面图</div>
<div class="a" style="left:810.5px;top:399.5px;width:5.2px;height:5.2px;background:#fff;border:0.6px solid #9a9a9a"></div>
<div class="a" style="left:811.7px;top:401.8px;width:2.8px;height:0.6px;background:#333"></div>
<div class="t" style="left:817px;top:399.25px;font-size:6.1px;color:#222;-webkit-text-stroke:0.2px #222">图纸-大样图</div>
<svg class="a" style="left:823px;top:410.12px" width="3" height="2" viewBox="0 0 3 2"><path d="M0 1H3" stroke="#a0a0a0" stroke-width=".7" stroke-dasharray="1 1"/></svg>
<svg class="a" style="left:821.5px;top:405.1px" width="2" height="6.019999999999982" viewBox="0 0 2 6.019999999999982"><path d="M1 0V6.019999999999982" stroke="#a0a0a0" stroke-width=".7" stroke-dasharray="1 1"/></svg>
<div class="t" style="left:826.5px;top:408.27px;font-size:6.1px;color:#333;-webkit-text-stroke:0.2px #333">门窗大样</div>
<svg class="a" style="left:813px;top:419.14px" width="3" height="2" viewBox="0 0 3 2"><path d="M0 1H3" stroke="#a0a0a0" stroke-width=".7" stroke-dasharray="1 1"/></svg>
<div class="t" style="left:817px;top:417.29px;font-size:6.1px;color:#222;-webkit-text-stroke:0.2px #222">明细表</div>
<div class="a" style="left:810.5px;top:426.55999999999995px;width:5.2px;height:5.2px;background:#fff;border:0.6px solid #9a9a9a"></div>
<div class="a" style="left:811.7px;top:428.85999999999996px;width:2.8px;height:0.6px;background:#333"></div>
<div class="t" style="left:817px;top:426.31px;font-size:6.1px;color:#222;-webkit-text-stroke:0.2px #222">空间层</div>
<svg class="a" style="left:821.5px;top:432.15999999999997px" width="2" height="6.019999999999982" viewBox="0 0 2 6.019999999999982"><path d="M1 0V6.019999999999982" stroke="#a0a0a0" stroke-width=".7" stroke-dasharray="1 1"/></svg>
<svg class="a" style="left:823px;top:437.17999999999995px" width="4" height="2" viewBox="0 0 4 2"><path d="M0 1H4" stroke="#a0a0a0" stroke-width=".7" stroke-dasharray="1 1"/></svg>
<svg class="a" style="left:826.5px;top:434.37999999999994px" width="7" height="7.5" viewBox="0 0 7 7.5"><path d="M2 3.3v-1.2a1.5 1.5 0 0 1 3 0" stroke="#2f9ae8" stroke-width=".7" fill="none"/><rect x="1" y="3.3" width="5.2" height="3.6" rx=".7" fill="#fff" stroke="#2f9ae8" stroke-width=".75"/><rect x="3.3" y="4.5" width=".7" height="1.4" fill="#2f9ae8"/></svg>
<div class="t" style="left:835px;top:435.48px;font-size:5.8px;color:#2f9ae8;">非标</div>
<div class="t" style="left:848px;top:435.33px;font-size:6.1px;color:#333;-webkit-text-stroke:0.2px #333">空间层</div>
<div class="a" style="left:97px;top:439px;width:706px;height:13px;background:#fff;border-bottom:1px solid #d8d8d8"></div>
<div class="t" style="left:103px;top:443.05px;font-size:6.1px;color:#333;-webkit-text-stroke:0.16px #333">绘图</div>
<div class="t" style="left:117px;top:442.80px;font-size:6.6px;color:#333;">1:</div>
<div class="t" style="left:124px;top:442.70px;font-size:6.8px;color:#4a80c0;">100</div>
<div class="a" style="left:142px;top:440px;width:9.5px;height:11px;background:#e8e8e8"></div>
<svg class="a" style="left:144.5px;top:444.5px" width="5" height="3" viewBox="0 0 5 3"><path d="M.6 .6l1.9 1.8l1.9-1.8" stroke="#666" stroke-width=".8" fill="none"/></svg>
<div class="t" style="left:156px;top:443.05px;font-size:6.1px;color:#333;-webkit-text-stroke:0.16px #333">出图</div>
<div class="t" style="left:170px;top:442.80px;font-size:6.6px;color:#333;">1:</div>
<div class="t" style="left:177px;top:442.70px;font-size:6.8px;color:#4a80c0;">100</div>
<div class="a" style="left:195px;top:440px;width:9.5px;height:11px;background:#e8e8e8"></div>
<svg class="a" style="left:197.5px;top:444.5px" width="5" height="3" viewBox="0 0 5 3"><path d="M.6 .6l1.9 1.8l1.9-1.8" stroke="#666" stroke-width=".8" fill="none"/></svg>
<svg class="a" style="left:209.8px;top:440.5px" width="11" height="10" viewBox="0 0 11 10"><ellipse cx="5" cy="5" rx="4.5" ry="3" fill="none" stroke="#888" stroke-width="1"/><circle cx="5" cy="5" r="1.4" fill="#aaa"/><path d="M1 9l8-8" stroke="#2a9ad8" stroke-width=".8"/></svg>
<svg class="a" style="left:228.4px;top:440.5px" width="11" height="10" viewBox="0 0 11 10"><circle cx="1.4" cy="1.2" r="1.2" fill="none" stroke="#8a8a8a" stroke-width=".7"/><circle cx="1.4" cy="3.8" r="1.2" fill="none" stroke="#8a8a8a" stroke-width=".7"/><circle cx="1.4" cy="6.4" r="1.2" fill="none" stroke="#8a8a8a" stroke-width=".7"/><circle cx="1.4" cy="9.0" r="1.2" fill="none" stroke="#8a8a8a" stroke-width=".7"/><circle cx="4.0" cy="1.2" r="1.2" fill="none" stroke="#8a8a8a" stroke-width=".7"/><circle cx="4.0" cy="3.8" r="1.2" fill="none" stroke="#8a8a8a" stroke-width=".7"/><circle cx="4.0" cy="6.4" r="1.2" fill="none" stroke="#8a8a8a" stroke-width=".7"/><circle cx="4.0" cy="9.0" r="1.2" fill="none" stroke="#8a8a8a" stroke-width=".7"/><circle cx="6.6" cy="1.2" r="1.2" fill="none" stroke="#8a8a8a" stroke-width=".7"/><circle cx="6.6" cy="3.8" r="1.2" fill="none" stroke="#8a8a8a" stroke-width=".7"/><circle cx="6.6" cy="6.4" r="1.2" fill="none" stroke="#8a8a8a" stroke-width=".7"/><circle cx="6.6" cy="9.0" r="1.2" fill="none" stroke="#8a8a8a" stroke-width=".7"/><circle cx="9.200000000000001" cy="1.2" r="1.2" fill="none" stroke="#8a8a8a" stroke-width=".7"/><circle cx="9.200000000000001" cy="3.8" r="1.2" fill="none" stroke="#8a8a8a" stroke-width=".7"/><circle cx="9.200000000000001" cy="6.4" r="1.2" fill="none" stroke="#8a8a8a" stroke-width=".7"/><circle cx="9.200000000000001" cy="9.0" r="1.2" fill="none" stroke="#8a8a8a" stroke-width=".7"/></svg>
<svg class="a" style="left:245.6px;top:440.5px" width="11" height="10" viewBox="0 0 11 10"><ellipse cx="5" cy="5" rx="4.5" ry="3" fill="none" stroke="#999" stroke-width="1"/><ellipse cx="5" cy="5" rx="2" ry="1.5" fill="#aaa"/></svg>
<svg class="a" style="left:263.4px;top:440.5px" width="11" height="10" viewBox="0 0 11 10"><rect x="2" y="4" width="6" height="5.5" rx="1" fill="none" stroke="#888" stroke-width=".9"/><path d="M3.2 4v-1.5a1.8 1.8 0 0 1 3.6 0v1.5" stroke="#888" stroke-width=".9" fill="none"/></svg>
<svg class="a" style="left:281.3px;top:440.5px" width="11" height="10" viewBox="0 0 11 10"><path d="M2.3 2.8a4.3 4.3 0 1 0 5.4 0" stroke="#555" stroke-width=".8" fill="none"/><path d="M5 1.2v1.5" stroke="#333" stroke-width="1.2"/><path d="M5 2.5l-2.2 3.8a2.4 2.4 0 1 0 4.4 0z" fill="#3aa0e0"/></svg>
<svg class="a" style="left:298.5px;top:440.5px" width="11" height="10" viewBox="0 0 11 10"><path d="M2.3 2.8a4.3 4.3 0 1 0 5.4 0" stroke="#555" stroke-width=".8" fill="none"/><path d="M5 1.2v1.5" stroke="#333" stroke-width="1.2"/><path d="M5 2.5l-2.2 3.8a2.4 2.4 0 1 0 4.4 0z" fill="#3aa0e0"/></svg>
<svg class="a" style="left:317.9px;top:440.5px" width="11" height="10" viewBox="0 0 11 10"><path d="M1 8l2-6h7l-2 6z" fill="#44aae8"/><path d="M4.5 8l2-6" stroke="#222" stroke-width="1.3"/></svg>
<svg class="a" style="left:335px;top:440.5px" width="11" height="10" viewBox="0 0 11 10"><path d="M1.5 8.5l7-7M1.5 8.5v-3M1.5 8.5h3M8.5 1.5v3M8.5 1.5h-3" stroke="#3a5a80" stroke-width="1.2" fill="none"/></svg>
<svg class="a" style="left:352.5px;top:440.5px" width="11" height="10" viewBox="0 0 11 10"><path d="M3 0.5v9M7 0.5v9M0.5 3h9M0.5 7h9" stroke="#777" stroke-width="1"/></svg>
<svg class="a" style="left:370.8px;top:440.5px" width="11" height="10" viewBox="0 0 11 10"><path d="M1 3h6" stroke="#5aa040" stroke-width="1.5"/><path d="M6 1l2.5 2l-2.5 2z" fill="#5aa040"/><rect x="1" y="6" width="8" height="3.5" fill="#555"/></svg>
<svg class="a" style="left:387.5px;top:440.5px" width="11" height="10" viewBox="0 0 11 10"><path d="M1 2h8M1 9h8" stroke="#aaa" stroke-width=".8"/><path d="M1 5.5h8" stroke="#e87a20" stroke-width="1.3" stroke-dasharray="2 1"/></svg>
<svg class="a" style="left:405px;top:440.5px" width="11" height="10" viewBox="0 0 11 10"><path d="M5 1l4 2v3l-4 2l-4-2v-3z" fill="#fff" stroke="#666" stroke-width=".8"/><path d="M3 9l2 1l2-1" stroke="#666" stroke-width=".8" fill="none"/></svg>
<svg class="a" style="left:423.7px;top:440.5px" width="11" height="10" viewBox="0 0 11 10"><path d="M0.5 1h8l-3 4v4h-2v-4z" fill="#fff" stroke="#888" stroke-width=".9"/><circle cx="8" cy="7" r="1.5" fill="#5aaa5a"/></svg>
<svg class="a" style="left:440.8px;top:440.5px" width="11" height="10" viewBox="0 0 11 10"><rect x="0.5" y="0.5" width="6" height="5" fill="#fff" stroke="#999" stroke-width=".8"/><rect x="3.5" y="3.5" width="6.5" height="6" fill="#8ac4ec" stroke="#5aa0d8" stroke-width=".7"/></svg>
<svg class="a" style="left:460.3px;top:440.5px" width="11" height="10" viewBox="0 0 11 10"><rect x="0.5" y="0.5" width="6" height="5" fill="#fff" stroke="#999" stroke-width=".8"/><rect x="3.5" y="3.5" width="6.5" height="6" fill="none" stroke="#888" stroke-width=".8"/></svg>
<svg class="a" style="left:479px;top:440.5px" width="11" height="10" viewBox="0 0 11 10"><rect x="0.5" y="0.5" width="6.5" height="9" fill="#f4f4f4" stroke="#9cd0f0" stroke-width=".8"/><path d="M6 5.5h5M8.5 3v5" stroke="#222" stroke-width="1.1"/></svg>
<div class="a" style="left:0px;top:452.8px;width:497px;height:20.8px;background:#fff;border-top:1px solid #d6d6d6;border-bottom:1px solid #d6d6d6"></div>
<div class="t" style="left:4px;top:457.60px;font-size:5.6px;color:#2a2a2a;-webkit-text-stroke:0.18px #2a2a2a">视图缩放已完成</div>
<div class="t" style="left:4px;top:466.40px;font-size:5.6px;color:#2a2a2a;-webkit-text-stroke:0.18px #2a2a2a">视图缩放已完成</div>
<div class="a" style="left:488.5px;top:455.5px;width:6px;height:6.5px;background:#fff;border:0.7px solid #aaa"></div>
<svg class="a" style="left:489.7px;top:457.2px" width="4" height="3" viewBox="0 0 4 3"><path d="M0 2.5h3.5l-1.75-2z" fill="#222"/></svg>
<div class="a" style="left:488.5px;top:463.5px;width:6px;height:6.5px;background:#fff;border:0.7px solid #aaa"></div>
<svg class="a" style="left:489.7px;top:465.5px" width="4" height="3" viewBox="0 0 4 3"><path d="M0 .3h3.5l-1.75 2z" fill="#222"/></svg>
<div class="t" style="left:3px;top:479.20px;font-size:6px;color:#2a2a2a;-webkit-text-stroke:0.18px #2a2a2a">命令:</div>
<div class="a" style="left:19.2px;top:474.5px;width:0.8px;height:10px;background:#ccc"></div>
<div class="a" style="left:280.7px;top:475px;width:32.3px;height:9px;background:#d8d8d8"></div>
<div class="t" style="left:284.5px;top:477.90px;font-size:5.6px;color:#333;-webkit-text-stroke:0.16px #333">命令搜索</div>
<div class="a" style="left:319px;top:475px;width:21px;height:9px;background:#e6e6e6"></div>
<div class="a" style="left:323px;top:476.5px;width:6.5px;height:6.5px;background:#fff;border:0.7px solid #555"></div>
<svg class="a" style="left:323.5px;top:477px" width="6" height="6" viewBox="0 0 6 6"><path d="M1 3l1.5 1.5l2.5-3" stroke="#111" stroke-width=".9" fill="none"/></svg>
<div class="t" style="left:331.5px;top:477.80px;font-size:5.8px;color:#d02020;-webkit-text-stroke:0.1px #d02020">弹</div>
<div class="a" style="left:342px;top:475px;width:12px;height:9px;background:#e0e0e0"></div>
<svg class="a" style="left:344px;top:476px" width="9" height="8" viewBox="0 0 9 8"><path d="M1.5 7l5-5.5l1.5 1.3l-5 5.5z" fill="none" stroke="#999" stroke-width=".8"/></svg>
<div class="a" style="left:355px;top:475px;width:105px;height:9px;background:#eeeeee;border:0.7px solid #d0d0d0"></div>
<div class="a" style="left:460px;top:475px;width:37px;height:9px;background:#e4e4e4"></div>
<div class="t" style="left:463px;top:478.10px;font-size:5.6px;color:#333;-webkit-text-stroke:0.16px #333">发表</div>
<div class="t" style="left:482px;top:478.10px;font-size:5.6px;color:#333;-webkit-text-stroke:0.16px #333">弹窗</div>
<div class="a" style="left:497px;top:452.8px;width:403px;height:31.2px;background:#fff"></div>
<div class="a" style="left:497px;top:452.8px;width:403px;height:0.8px;background:#e0e0e0"></div>
<svg class="a" style="left:499.5px;top:455px" width="14" height="14" viewBox="0 0 14 14"><path d="M1 2h12M1 12h12" stroke="#999" stroke-width=".9"/><circle cx="3" cy="7" r="1.3" fill="none" stroke="#3a90d8" stroke-width=".9"/><circle cx="7" cy="7" r="1.3" fill="none" stroke="#3a90d8" stroke-width=".9"/><circle cx="11" cy="7" r="1.3" fill="none" stroke="#3a90d8" stroke-width=".9"/></svg>
<div class="a" style="left:515px;top:457px;width:84px;height:12.5px;background:linear-gradient(#f4f4f4,#e6e6e6);border:0.8px solid #c4c4c4;border-radius:1px"></div>

<svg class="a" style="left:591px;top:462px" width="5" height="3" viewBox="0 0 5 3"><path d="M.6 .6l1.9 1.8l1.9-1.8" stroke="#444" stroke-width=".8" fill="none"/></svg>
<div class="a" style="left:518.4px;top:459.6px;width:5.6px;height:5.6px;background:#fff;border:0.5px solid #e4e4e4"></div>
<div class="t" style="left:525.5px;top:460.95px;font-size:5.9px;color:#3a70b0;">A-SLAB</div>
<div class="a" style="left:602px;top:457px;width:41.5px;height:12.5px;background:linear-gradient(#f4f4f4,#e6e6e6);border:0.8px solid #c4c4c4;border-radius:1px"></div>

<svg class="a" style="left:635.5px;top:462px" width="5" height="3" viewBox="0 0 5 3"><path d="M.6 .6l1.9 1.8l1.9-1.8" stroke="#444" stroke-width=".8" fill="none"/></svg>
<div class="a" style="left:605px;top:460px;width:5.8px;height:5.8px;background:#ff00ff"></div>
<div class="t" style="left:611.8px;top:460.90px;font-size:6px;color:#3a70b0;-webkit-text-stroke:0.1px #3a70b0">洋红</div>
<div class="a" style="left:646.2px;top:457px;width:72.3px;height:12.5px;background:linear-gradient(#f4f4f4,#e6e6e6);border:0.8px solid #c4c4c4;border-radius:1px"></div>

<svg class="a" style="left:710.5px;top:462px" width="5" height="3" viewBox="0 0 5 3"><path d="M.6 .6l1.9 1.8l1.9-1.8" stroke="#444" stroke-width=".8" fill="none"/></svg>
<div class="a" style="left:649.5px;top:462.2px;width:31px;height:0.8px;background:#666"></div>
<div class="t" style="left:682.7px;top:460.90px;font-size:6px;color:#4a80c0;">ByLayer</div>
<div class="a" style="left:721.2px;top:457px;width:56.4px;height:12.5px;background:linear-gradient(#f4f4f4,#e6e6e6);border:0.8px solid #c4c4c4;border-radius:1px"></div>

<svg class="a" style="left:769.6px;top:462px" width="5" height="3" viewBox="0 0 5 3"><path d="M.6 .6l1.9 1.8l1.9-1.8" stroke="#444" stroke-width=".8" fill="none"/></svg>
<div class="a" style="left:724px;top:462.2px;width:20px;height:0.8px;background:#666"></div>
<div class="t" style="left:746.6px;top:460.90px;font-size:6px;color:#4a80c0;">ByLayer</div>
<svg class="a" style="left:782px;top:456px" width="14" height="14" viewBox="0 0 14 14"><path d="M1 2.5h8.5M5.2 2.5v10.5M3.5 13h3.5M1 2.5v1.5M9.5 2.5v1.5" stroke="#2a2a2a" stroke-width="1.5"/><path d="M7 12.5l5.5-7" stroke="#e8902a" stroke-width="1.8"/></svg>
<div class="a" style="left:797px;top:457px;width:32px;height:12.5px;background:linear-gradient(#f4f4f4,#e6e6e6);border:0.8px solid #c4c4c4;border-radius:1px"></div>

<svg class="a" style="left:821px;top:462px" width="5" height="3" viewBox="0 0 5 3"><path d="M.6 .6l1.9 1.8l1.9-1.8" stroke="#444" stroke-width=".8" fill="none"/></svg>
<div class="t" style="left:800px;top:461.20px;font-size:5.4px;color:#4a80c0;-webkit-text-stroke:0.08px #4a80c0">3号字</div>
<svg class="a" style="left:832px;top:455px" width="15" height="14" viewBox="0 0 15 14"><path d="M1.5 8.5h12v2.5h-12z" fill="#e8e8e8" stroke="#666" stroke-width=".8"/><circle cx="2" cy="11" r="1.6" fill="#e8e8e8" stroke="#666" stroke-width=".7"/><circle cx="13" cy="11" r="1.6" fill="#e8e8e8" stroke="#666" stroke-width=".7"/><circle cx="7.5" cy="5" r="3.2" fill="#5aa050" stroke="#777" stroke-width=".9" stroke-dasharray="1 .6"/><circle cx="7.5" cy="5" r="1.2" fill="#cde8c0"/></svg>
<div class="a" style="left:848px;top:457px;width:51px;height:12.5px;background:linear-gradient(#f4f4f4,#e6e6e6);border:0.8px solid #c4c4c4;border-radius:1px"></div>

<svg class="a" style="left:891px;top:462px" width="5" height="3" viewBox="0 0 5 3"><path d="M.6 .6l1.9 1.8l1.9-1.8" stroke="#444" stroke-width=".8" fill="none"/></svg>
<div class="t" style="left:851.4px;top:461.05px;font-size:5.7px;color:#4a80c0;">DIM_100_100</div>
<svg class="a" style="left:502px;top:474px" width="11" height="11" viewBox="0 0 11 11"><circle cx="5" cy="6" r="3.5" fill="none" stroke="#777" stroke-width="1.1"/><circle cx="5" cy="6" r="1.5" fill="none" stroke="#777" stroke-width=".8"/></svg>
<svg class="a" style="left:521px;top:474px" width="11" height="11" viewBox="0 0 11 11"><path d="M1 4.5l4-2.5l4 2.5l-4 2.5z M1 6.5l4 2.5l4-2.5 M1 8.5l4 2.5l4-2.5" fill="none" stroke="#777" stroke-width=".8"/></svg>
<svg class="a" style="left:541px;top:474px" width="11" height="11" viewBox="0 0 11 11"><rect x="0.5" y="5" width="3" height="3" fill="none" stroke="#777" stroke-width=".8"/><rect x="6" y="1" width="3" height="3" fill="none" stroke="#777" stroke-width=".8"/><rect x="6" y="7" width="3" height="3" fill="none" stroke="#777" stroke-width=".8"/><path d="M3.5 6.5h2.5M6 2.5v6" stroke="#777" stroke-width=".7"/></svg>
<svg class="a" style="left:561px;top:474px" width="11" height="11" viewBox="0 0 11 11"><circle cx="5" cy="7" r="3.5" fill="none" stroke="#777" stroke-width=".9"/><path d="M3 6h4M3 8h4" stroke="#777" stroke-width=".7"/><circle cx="5" cy="2" r="1" fill="#555"/></svg>
<svg class="a" style="left:580px;top:474px" width="11" height="11" viewBox="0 0 11 11"><rect x="1" y="1" width="8" height="10" fill="none" stroke="#777" stroke-width=".9"/><path d="M6 1v10" stroke="#777" stroke-width=".8"/></svg>
<svg class="a" style="left:600px;top:474px" width="11" height="11" viewBox="0 0 11 11"><rect x=".5" y="1" width="3" height="3" fill="none" stroke="#777" stroke-width=".7"/><rect x=".5" y="6" width="3" height="3" fill="none" stroke="#777" stroke-width=".7"/><path d="M5 2.5h5M5 5h5M5 7.5h5" stroke="#777" stroke-width=".8"/></svg>
<svg class="a" style="left:619px;top:474px" width="11" height="11" viewBox="0 0 11 11"><path d="M1 2h6l2 2v7h-8z" fill="#fff" stroke="#777" stroke-width=".8"/><path d="M2 5h4" stroke="#5aa040" stroke-width="1.3"/><rect x="1.5" y="7.5" width="7" height="2.5" fill="#666"/></svg>
<svg class="a" style="left:639px;top:474px" width="11" height="11" viewBox="0 0 11 11"><rect x="0.5" y="1" width="9" height="10" fill="#dbe8f6" stroke="#6a9ad8" stroke-width=".8"/><path d="M2 9l6-6M2 9h6" stroke="#2a7ad8" stroke-width=".9"/></svg>
<svg class="a" style="left:659px;top:474px" width="11" height="11" viewBox="0 0 11 11"><path d="M2 4q3-3 6 0M2 8q3 3 6 0" stroke="#d84a4a" stroke-width="1.2" fill="none"/><rect x="3" y="4.5" width="4" height="3" fill="#6a8ab8"/></svg>
<svg class="a" style="left:678px;top:474px" width="11" height="11" viewBox="0 0 11 11"><rect x="0.5" y="1" width="9" height="10" fill="#f6e6c8" stroke="#aaa" stroke-width=".8"/><path d="M2 9l6-6" stroke="#e8a030" stroke-width="2"/></svg>
<svg class="a" style="left:695px;top:474px" width="11" height="11" viewBox="0 0 11 11"><path d="M1 5l3-3l3 3M4 2v8M9 7l-3 3l-3-3" stroke="#777" stroke-width=".9" fill="none"/></svg>
<svg class="a" style="left:713px;top:474px" width="11" height="11" viewBox="0 0 11 11"><path d="M1 10l1-3l5-5l2 2l-5 5z" fill="none" stroke="#777" stroke-width=".9"/></svg>
<svg class="a" style="left:732px;top:474px" width="11" height="11" viewBox="0 0 11 11"><rect x="1" y="4" width="8" height="5" fill="none" stroke="#888" stroke-width=".9"/><rect x="2.5" y="1" width="5" height="3" fill="none" stroke="#888" stroke-width=".8"/></svg>
<svg class="a" style="left:750px;top:474px" width="11" height="11" viewBox="0 0 11 11"><path d="M1 1h8v9h-8z M1 5.5h8M5 1v9" stroke="#444" stroke-width=".9" fill="none"/></svg>
<div class="t" style="left:873px;top:477.75px;font-size:6.9px;color:#333;">V5-2.61</div>
</body></html>
